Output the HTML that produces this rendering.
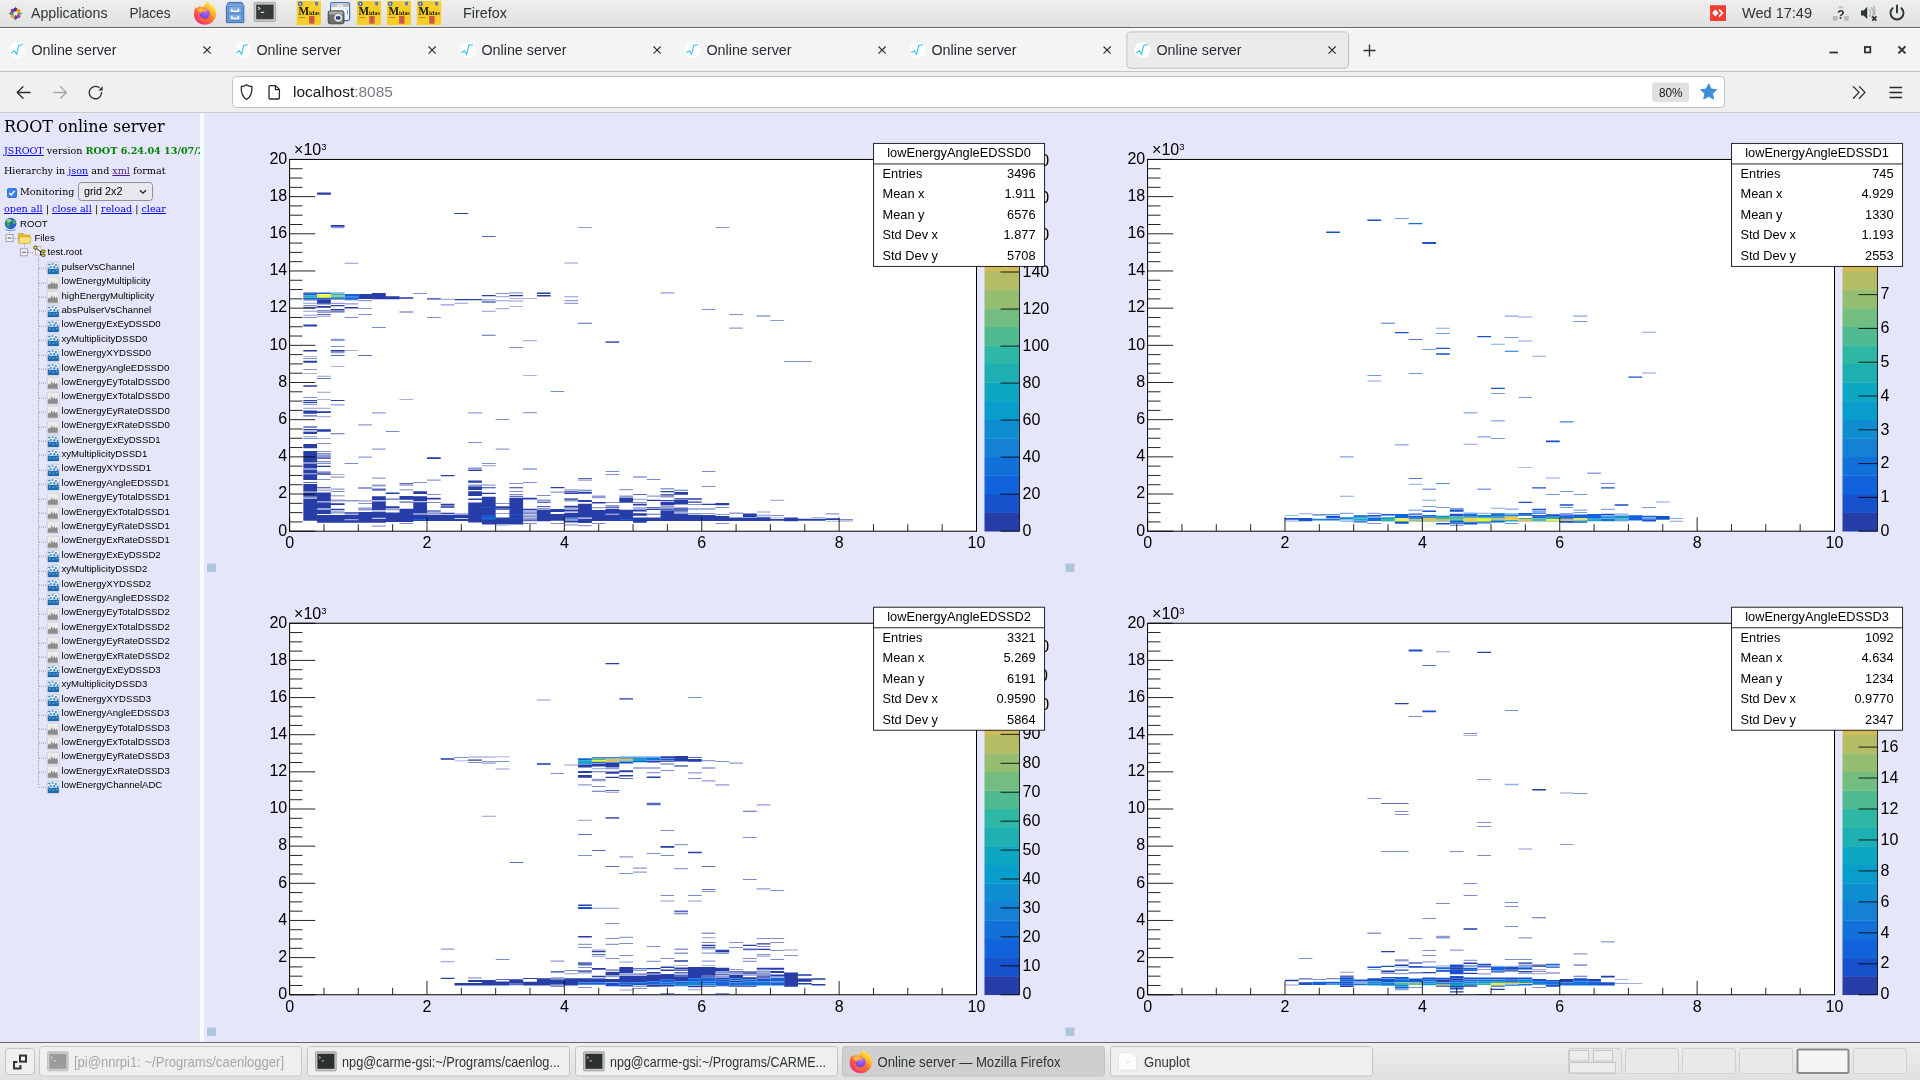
<!DOCTYPE html>
<html lang="en"><head><meta charset="utf-8"><title>Online server</title>
<style>
html,body{margin:0;padding:0;width:1920px;height:1080px;overflow:hidden;background:#e6e6fa}
svg,#side{will-change:transform}
body{position:relative;font-family:"Liberation Sans",sans-serif}
#panel{position:absolute;left:0;top:0;width:1920px;height:27px;background:linear-gradient(#eeeeee,#e1e1e1);border-bottom:1px solid #686868}
#tabbar{position:absolute;left:0;top:28px;width:1920px;height:43px;background:linear-gradient(#fff,#fff 1px,#f4f4f4 1px);border-bottom:1px solid #c2c2c4}
#navbar{position:absolute;left:0;top:72px;width:1920px;height:40px;background:#f0f0f1;border-bottom:1px solid #c9c9cc}
#urlbar{position:absolute;left:231.500px;top:4px;width:1493px;height:32px;background:#fff;border:1px solid #c3c3c8;border-radius:4px;box-sizing:border-box}
#side{position:absolute;left:0;top:0;width:200px;height:1043px;overflow:hidden;font-family:"DejaVu Serif",serif;font-size:9.6px;color:#000}
#sep{position:absolute;left:200px;top:113px;width:4.200px;height:929px;background:#f0ffff}
#side .ttl{position:absolute;left:4px;top:116.500px;font-size:16px;white-space:nowrap;line-height:19px}
#side .ln{position:absolute;left:4px;white-space:nowrap;line-height:12px}
#side .lk{color:#0000ee;text-decoration:underline}
#side .lk.vis{color:#551a8b}
#side .gr{color:#008000;font-weight:bold}
#side .cb{position:absolute;left:6.800px;top:188px;width:10px;height:10px}
#side .sel{position:absolute;left:78px;top:181.500px;width:74.500px;height:19.500px;box-sizing:border-box;border:1px solid #8f8f9d;border-radius:3.500px;background:#e9e9ed;font-family:"Liberation Sans",sans-serif;font-size:10.8px;line-height:17px;padding-left:5px;color:#000}
#side .tr{position:absolute;font-family:"Liberation Sans",sans-serif;font-size:9.6px;line-height:12px;white-space:nowrap;color:#000}
#taskbar{position:absolute;left:0;top:1042px;width:1920px;height:38px;background:linear-gradient(#eeeeee,#e0e0e0);border-top:1px solid #686868;box-sizing:border-box}
</style></head>
<body>
<div id="panel"><svg width="1920" height="28" viewBox="0 0 1920 28" style="position:absolute;left:0;top:0;font-family:'Liberation Sans',sans-serif">
<g transform="translate(15.5,13.5)">
<circle cx="4.00" cy="0.00" r="2.0" fill="#8bc34a"/>
<circle cx="2.83" cy="2.83" r="2.0" fill="#a54aa8"/>
<circle cx="0.00" cy="4.00" r="2.0" fill="#3f51b5"/>
<circle cx="-2.83" cy="2.83" r="2.0" fill="#f5a623"/>
<circle cx="-4.00" cy="0.00" r="2.0" fill="#4caf50"/>
<circle cx="-2.83" cy="-2.83" r="2.0" fill="#9c27b0"/>
<circle cx="-0.00" cy="-4.00" r="2.0" fill="#283593"/>
<circle cx="2.83" cy="-2.83" r="2.0" fill="#ff9800"/>
<path d="M-7 0 L7 0 M0 -7 L0 7" stroke="#5a5a9a" stroke-width="0.8" opacity="0.6"/>
<circle cx="0" cy="0" r="1.6" fill="#ececec"/>
</g>
<text x="31" y="18" font-size="14.6" fill="#2e3436" textLength="76.5" lengthAdjust="spacingAndGlyphs" font-weight="normal" >Applications</text>
<text x="129.5" y="18" font-size="14.6" fill="#2e3436" textLength="41" lengthAdjust="spacingAndGlyphs" font-weight="normal" >Places</text>
<g transform="translate(193,0.8) scale(1.0)"><defs><linearGradient id="ffA" x1="0.82" y1="0.08" x2="0.22" y2="0.95"><stop offset="0" stop-color="#fff45e"/><stop offset="0.28" stop-color="#ffbc2c"/><stop offset="0.58" stop-color="#ff6e38"/><stop offset="1" stop-color="#ee2a80"/></linearGradient><radialGradient id="ffB" cx="0.55" cy="0.3" r="0.8"><stop offset="0" stop-color="#b96cff"/><stop offset="1" stop-color="#5f3bdc"/></radialGradient><linearGradient id="ffC" x1="0.1" y1="0" x2="0.8" y2="1"><stop offset="0" stop-color="#ffd23a"/><stop offset="1" stop-color="#ff8a2c"/></linearGradient></defs>
<path d="M12.3 3.4 C13.5 2.4 14.1 1.2 14.3 0.2 C16.6 2 18.1 4 18.7 6.1 C19.1 5.4 19.2 4.6 19.1 3.8 C21.6 6.100 23.3 9.500 23.100 13.300 C22.800 19.500 17.900 24 12.100 24 C5.900 24 1 19.400 0.900 13.500 C0.800 10.500 1.900 7.700 3.500 5.900 C3.500 6.900 3.700 7.700 4.100 8.300 C4.700 6.900 5.700 5.900 6.900 5.300 C7.700 6.300 9.100 6.700 10.300 6.300 C10.700 5.100 11.400 4.100 12.300 3.400Z" fill="url(#ffA)"/>
<circle cx="11.7" cy="13" r="5" fill="url(#ffB)"/>
<path d="M4.400 9.200 C6.400 7.300 9.500 7.200 11.700 8.600 C13.100 8.400 14.500 9 15.200 10.100 C13.500 9.700 12.100 10.100 11.300 11.100 C9.700 10.700 8.100 11.300 7.300 12.700 C6.700 11.100 5.600 9.900 4.400 9.200Z" fill="url(#ffC)"/>
<path d="M6.700 14.200 C7.200 17.800 10.400 19.800 13.600 19 C16.600 18.200 18.200 15.400 17.400 12.500 C19 14.700 18.700 18.200 16.200 20.200 C13.100 22.600 8.600 21.800 6.700 18.700 C6 17.400 6.100 15.500 6.700 14.200Z" fill="#ff6a34" opacity="0.85"/>
</g>
<g>
<path d="M228.400 2.400 h13.400 l2 3.200 v17 h-17.400 v-17z" fill="#6b9bd8" stroke="#3c6cb2" stroke-width="1" stroke-linejoin="round"/>
<path d="M226.600 5.600 h17" stroke="#8fb6e8" stroke-width="0.8"/>
<rect x="228.600" y="6.600" width="13" height="6.400" fill="#86b0e2" stroke="#4c7cc0" stroke-width="0.7"/>
<rect x="228.600" y="14" width="13" height="6.400" fill="#86b0e2" stroke="#4c7cc0" stroke-width="0.7"/>
<path d="M231.800 8.800 v2.400 h6.600 v-2.400" fill="none" stroke="#f4f6fa" stroke-width="1.500" stroke-linejoin="round"/>
<path d="M231.800 16 v2.400 h6.600 v-2.400" fill="none" stroke="#f4f6fa" stroke-width="1.500" stroke-linejoin="round"/>
</g>
<g>
<rect x="254.2" y="2.4" width="21.4" height="19" rx="1" fill="#c9c9c7" stroke="#9b9b99" stroke-width="0.8"/>
<rect x="256.2" y="4.6" width="17.4" height="14.6" fill="#363b39"/>
<path d="M258 7.200 l2.300 1.300 l-2.300 1.300" fill="none" stroke="#f0f2f0" stroke-width="0.9"/>
<rect x="260.800" y="11.800" width="3.400" height="1.100" fill="#f0f2f0"/>
</g>
<g transform="translate(296.8,1)">
<rect x="0" y="0" width="24.2" height="24" fill="#f7ce28"/>
<circle cx="3.5" cy="2.7" r="2.3" fill="#2f5aa0"/><circle cx="3.5" cy="2.7" r="1" fill="#e4ebf6"/>
<path d="M18.2 0.8 h3 v2.6 l-1.5 1.6 l-1.5 -1.6z" fill="#5a7cc0"/>
<text x="1.6" y="13.6" font-family="'Liberation Serif', serif" font-weight="bold" font-size="11.8" fill="#1c1b12" textLength="21.4" lengthAdjust="spacingAndGlyphs">M<tspan font-size="6.6">idas</tspan></text>
<rect x="2" y="16.2" width="6.600" height="0.8" fill="#8d8030"/>
<rect x="12.3" y="14.900" width="5.400" height="7.800" fill="#e4552a"/>
<rect x="14.4" y="16.2" width="1.200" height="5.600" fill="#6a6aa8"/>
</g>
<g>
<rect x="330.600" y="2.600" width="19" height="18" rx="1.800" fill="#f6f6f6" stroke="#3f6fb5" stroke-width="1.200"/>
<rect x="331.400" y="3.600" width="17.400" height="3.200" fill="#b9bcc2"/>
<rect x="337" y="4.400" width="6" height="2.400" fill="#e4e4e6"/>
<rect x="347" y="10" width="1" height="4.400" fill="#5b9ae6"/>
<rect x="331.600" y="8" width="15" height="10" fill="#fdfdfd" stroke="#cfd2d6" stroke-width="0.500"/>
<rect x="328.200" y="10.800" width="15.800" height="13" rx="2" fill="#6b6e6c" stroke="#3a3c3a" stroke-width="0.900"/>
<rect x="329" y="11.600" width="14.200" height="3" rx="1" fill="#a8abaa"/>
<rect x="330.400" y="10.200" width="4" height="1.600" fill="#8a8d8b"/>
<circle cx="338.300" cy="17.700" r="4.300" fill="#e6e8e7" stroke="#7c7f7d" stroke-width="0.700"/>
<rect x="336" y="16.200" width="4.400" height="3.200" rx="0.800" fill="#1c2c6c"/>
<rect x="336.400" y="16.600" width="2" height="1" fill="#4a78d8"/>
<circle cx="342" cy="21.800" r="0.700" fill="#f0a020"/>
</g>
<g transform="translate(356.9,1)">
<rect x="0" y="0" width="24.2" height="24" fill="#f7ce28"/>
<circle cx="3.5" cy="2.7" r="2.3" fill="#2f5aa0"/><circle cx="3.5" cy="2.7" r="1" fill="#e4ebf6"/>
<path d="M18.2 0.8 h3 v2.6 l-1.5 1.6 l-1.5 -1.6z" fill="#5a7cc0"/>
<text x="1.6" y="13.6" font-family="'Liberation Serif', serif" font-weight="bold" font-size="11.8" fill="#1c1b12" textLength="21.4" lengthAdjust="spacingAndGlyphs">M<tspan font-size="6.6">idas</tspan></text>
<rect x="2" y="16.2" width="6.600" height="0.8" fill="#8d8030"/>
<rect x="12.3" y="14.900" width="5.400" height="7.800" fill="#e4552a"/>
<rect x="14.4" y="16.2" width="1.200" height="5.600" fill="#6a6aa8"/>
</g>
<g transform="translate(386.8,1)">
<rect x="0" y="0" width="24.2" height="24" fill="#f7ce28"/>
<circle cx="3.5" cy="2.7" r="2.3" fill="#2f5aa0"/><circle cx="3.5" cy="2.7" r="1" fill="#e4ebf6"/>
<path d="M18.2 0.8 h3 v2.6 l-1.5 1.6 l-1.5 -1.6z" fill="#5a7cc0"/>
<text x="1.6" y="13.6" font-family="'Liberation Serif', serif" font-weight="bold" font-size="11.8" fill="#1c1b12" textLength="21.4" lengthAdjust="spacingAndGlyphs">M<tspan font-size="6.6">idas</tspan></text>
<rect x="2" y="16.2" width="6.600" height="0.8" fill="#8d8030"/>
<rect x="12.3" y="14.900" width="5.400" height="7.800" fill="#e4552a"/>
<rect x="14.4" y="16.2" width="1.200" height="5.600" fill="#6a6aa8"/>
</g>
<g transform="translate(416.9,1)">
<rect x="0" y="0" width="24.2" height="24" fill="#f7ce28"/>
<circle cx="3.5" cy="2.7" r="2.3" fill="#2f5aa0"/><circle cx="3.5" cy="2.7" r="1" fill="#e4ebf6"/>
<path d="M18.2 0.8 h3 v2.6 l-1.5 1.6 l-1.5 -1.6z" fill="#5a7cc0"/>
<text x="1.6" y="13.6" font-family="'Liberation Serif', serif" font-weight="bold" font-size="11.8" fill="#1c1b12" textLength="21.4" lengthAdjust="spacingAndGlyphs">M<tspan font-size="6.6">idas</tspan></text>
<rect x="2" y="16.2" width="6.600" height="0.8" fill="#8d8030"/>
<rect x="12.3" y="14.900" width="5.400" height="7.800" fill="#e4552a"/>
<rect x="14.4" y="16.2" width="1.200" height="5.600" fill="#6a6aa8"/>
</g>
<text x="463" y="18" font-size="14.6" fill="#2e3436" textLength="44" lengthAdjust="spacingAndGlyphs" font-weight="normal" >Firefox</text>
<rect x="1710" y="5.200" width="16" height="15.800" fill="#f33f33"/>
<path d="M1715.400 9.600 l3.200 3.500 l-3.200 3.500 l-3.200 -3.500z" fill="#fff"/><path d="M1719 9.600 l3.400 3.500 l-3.400 3.500" fill="none" stroke="#fff" stroke-width="1.600"/>
<text x="1742" y="18" font-size="14.6" fill="#2e3436" textLength="70" lengthAdjust="spacingAndGlyphs" font-weight="normal" >Wed 17:49</text>
<text x="1840.900" y="18.800" text-anchor="middle" font-size="12.500" font-weight="bold" fill="#2e3436">?</text>
<rect x="1832.900" y="16" width="4.600" height="4.800" fill="#b9b9b9"/><rect x="1844.200" y="16" width="4.600" height="4.800" fill="#b9b9b9"/><rect x="1838.400" y="6.200" width="4.800" height="2" fill="#c4c4c4"/>
<path d="M1861 10.400 h2.600 l3.600 -3.600 v12.200 l-3.600 -3.600 h-2.600z" fill="#2e3436"/>
<path d="M1869.200 9.200 a5.500 5.500 0 0 1 0 7.400 M1871.400 7.400 a8.500 8.500 0 0 1 0 11 M1873.600 6 a11 11 0 0 1 0.600 9" fill="none" stroke="#a4a6a6" stroke-width="1.100"/>
<path d="M1872.200 16.400 l4.200 4.200 m0 -4.200 l-4.200 4.200" stroke="#2e3436" stroke-width="1.800"/>
<path d="M1892.600 8.200 a6.500 6.500 0 1 0 8.800 0" fill="none" stroke="#2e3436" stroke-width="1.900" stroke-linecap="round"/><path d="M1897 5.400 v7" stroke="#2e3436" stroke-width="1.900" stroke-linecap="round"/>
</svg></div>
<div id="tabbar"><svg width="1920" height="44" viewBox="0 28 1920 44" style="position:absolute;left:0;top:0;font-family:'Liberation Sans',sans-serif">
<rect x="1126.900" y="31.900" width="221.600" height="36.400" rx="4" fill="#ebebec" stroke="#c2c2c6" stroke-width="1"/>
<circle cx="17.5" cy="50" r="8" fill="#fff"/><path d="M11.6 52.4 l3 -1.6 l2 3.6 l2.2 -9 l3.8 -0.6" fill="none" stroke="#35c4e4" stroke-width="1.1" stroke-linejoin="round" stroke-linecap="round"/>
<text x="31.5" y="55" font-size="14.6" fill="#2b2a33" textLength="85" lengthAdjust="spacingAndGlyphs" font-weight="normal" >Online server</text>
<path d="M203.5 46.5 l7.2 7.2 m0 -7.2 l-7.2 7.2" stroke="#2b2a33" stroke-width="1.1"/>
<circle cx="242.5" cy="50" r="8" fill="#fff"/><path d="M236.6 52.4 l3 -1.6 l2 3.6 l2.2 -9 l3.8 -0.6" fill="none" stroke="#35c4e4" stroke-width="1.1" stroke-linejoin="round" stroke-linecap="round"/>
<text x="256.5" y="55" font-size="14.6" fill="#2b2a33" textLength="85" lengthAdjust="spacingAndGlyphs" font-weight="normal" >Online server</text>
<path d="M428.5 46.5 l7.2 7.2 m0 -7.2 l-7.2 7.2" stroke="#2b2a33" stroke-width="1.1"/>
<circle cx="467.5" cy="50" r="8" fill="#fff"/><path d="M461.6 52.4 l3 -1.6 l2 3.6 l2.2 -9 l3.8 -0.6" fill="none" stroke="#35c4e4" stroke-width="1.1" stroke-linejoin="round" stroke-linecap="round"/>
<text x="481.5" y="55" font-size="14.6" fill="#2b2a33" textLength="85" lengthAdjust="spacingAndGlyphs" font-weight="normal" >Online server</text>
<path d="M653.5 46.5 l7.2 7.2 m0 -7.2 l-7.2 7.2" stroke="#2b2a33" stroke-width="1.1"/>
<circle cx="692.5" cy="50" r="8" fill="#fff"/><path d="M686.6 52.4 l3 -1.6 l2 3.6 l2.2 -9 l3.8 -0.6" fill="none" stroke="#35c4e4" stroke-width="1.1" stroke-linejoin="round" stroke-linecap="round"/>
<text x="706.5" y="55" font-size="14.6" fill="#2b2a33" textLength="85" lengthAdjust="spacingAndGlyphs" font-weight="normal" >Online server</text>
<path d="M878.5 46.5 l7.2 7.2 m0 -7.2 l-7.2 7.2" stroke="#2b2a33" stroke-width="1.1"/>
<circle cx="917.5" cy="50" r="8" fill="#fff"/><path d="M911.6 52.4 l3 -1.6 l2 3.6 l2.2 -9 l3.8 -0.6" fill="none" stroke="#35c4e4" stroke-width="1.1" stroke-linejoin="round" stroke-linecap="round"/>
<text x="931.5" y="55" font-size="14.6" fill="#2b2a33" textLength="85" lengthAdjust="spacingAndGlyphs" font-weight="normal" >Online server</text>
<path d="M1103.5 46.5 l7.2 7.2 m0 -7.2 l-7.2 7.2" stroke="#2b2a33" stroke-width="1.1"/>
<circle cx="1142.5" cy="50" r="8" fill="#fff"/><path d="M1136.6 52.4 l3 -1.6 l2 3.6 l2.2 -9 l3.8 -0.6" fill="none" stroke="#35c4e4" stroke-width="1.1" stroke-linejoin="round" stroke-linecap="round"/>
<text x="1156.5" y="55" font-size="14.6" fill="#2b2a33" textLength="85" lengthAdjust="spacingAndGlyphs" font-weight="normal" >Online server</text>
<path d="M1328.5 46.5 l7.2 7.2 m0 -7.2 l-7.2 7.2" stroke="#2b2a33" stroke-width="1.1"/>
<path d="M1363.5 50.5 h12 M1369.5 44.5 v12" stroke="#2b2a33" stroke-width="1.3"/>
<rect x="1829.5" y="51.6" width="8.4" height="1.8" fill="#2e3436"/>
<rect x="1864.9" y="47" width="5.4" height="5.4" fill="none" stroke="#2e3436" stroke-width="1.8"/>
<path d="M1898.4 46.4 l7 7 m0 -7 l-7 7" stroke="#2e3436" stroke-width="2"/>
</svg></div>
<div id="navbar"><div id="urlbar"></div><svg width="1920" height="41" viewBox="0 72 1920 41" style="position:absolute;left:0;top:0;font-family:'Liberation Sans',sans-serif">
<path d="M30 92.5 h-12.6 m5.6 -5.8 l-5.8 5.8 l5.8 5.8" fill="none" stroke="#2b2a33" stroke-width="1.3" stroke-linecap="round" stroke-linejoin="round"/>
<path d="M53.6 92.5 h12.6 m-5.6 -5.8 l5.8 5.8 l-5.8 5.8" fill="none" stroke="#a8a8ad" stroke-width="1.3" stroke-linecap="round" stroke-linejoin="round"/>
<path d="M101.6 92.6 a6.2 6.2 0 1 1 -2.6 -5.1" fill="none" stroke="#2b2a33" stroke-width="1.3" stroke-linecap="round"/><path d="M102.6 86.2 v4.2 h-4.2z" fill="#2b2a33"/>
<path d="M246.5 85 c2.2 0 4 -0.8 5.3 -1.6 c1.3 0.8 3.1 1.6 5.3 1.6 c0.4 6 -1.4 10.6 -5.3 13 c-3.9 -2.4 -5.7 -7 -5.300 -13z" transform="translate(-5.2,1.5) scale(1)" fill="none" stroke="#2b2a33" stroke-width="1.3" stroke-linejoin="round"/>
<path d="M270 85.6 h5.6 l3.8 3.8 v8.6 a1 1 0 0 1 -1 1 h-8.400 a1 1 0 0 1 -1 -1 v-11.4 a1 1 0 0 1 1 -1z M275.4 85.8 v3.8 h3.800" fill="none" stroke="#2b2a33" stroke-width="1.3" stroke-linejoin="round"/>
<text x="293" y="97" font-size="14.7" fill="#15141a" textLength="100" lengthAdjust="spacingAndGlyphs">localhost<tspan fill="#7c7c85">:8085</tspan></text>
<rect x="1652" y="82.5" width="37" height="19.500" rx="3" fill="#e0e0e1"/>
<text x="1659" y="97" font-size="12.6" fill="#15141a" textLength="23.5" lengthAdjust="spacingAndGlyphs" font-weight="normal" >80%</text>
<polygon points="1708.70,83.90 1711.05,89.06 1716.69,89.70 1712.50,93.54 1713.64,99.10 1708.70,96.30 1703.76,99.10 1704.90,93.54 1700.71,89.70 1706.35,89.06" fill="#3e8ddb" stroke="#3e8ddb" stroke-width="1" stroke-linejoin="round"/>
<path d="M1853.4 86.6 l5.6 5.8 l-5.6 5.800 M1859.400 86.6 l5.6 5.8 l-5.6 5.800" fill="none" stroke="#2b2a33" stroke-width="1.3" stroke-linecap="round" stroke-linejoin="round"/>
<path d="M1889.5 87.500 h12.6 M1889.5 92.500 h12.6 M1889.500 97.500 h12.600" stroke="#2b2a33" stroke-width="1.3"/>
</svg></div>
<div id="side">
<div class="ttl">ROOT online server</div>
<div class="ln" style="top:144.500px"><a class="lk">JSROOT</a> version <b class="gr">ROOT 6.24.04 13/07/2022</b></div>
<div class="ln" style="top:164.500px">Hierarchy in <a class="lk">json</a> and <a class="lk vis">xml</a> format</div>
<div class="cb"><svg width="10" height="10" viewBox="0 0 11 11" style="display:block"><rect x="0.5" y="0.500" width="10" height="10" rx="1.6" fill="#3b82e6" stroke="#2a6fd0"/><path d="M2.600 5.600 l2 2 l3.800 -4.400" fill="none" stroke="#fff" stroke-width="1.500"/></svg></div>
<div class="ln" style="top:185.500px;left:20px">Monitoring</div>
<div class="sel"><span>grid 2x2</span><svg width="8" height="6" viewBox="0 0 8 6" style="position:absolute;right:4.500px;top:6.500px"><path d="M1 1.200 l3 3 l3 -3" fill="none" stroke="#222" stroke-width="1.300"/></svg></div>
<div class="ln" style="top:202.500px"><a class="lk">open all</a> | <a class="lk">close all</a> | <a class="lk">reload</a> | <a class="lk">clear</a></div>
<svg width="200" height="930" viewBox="0 0 200 930" style="position:absolute;left:0;top:0">
<g><circle cx="10.600" cy="223.500" r="5.800" fill="#2a62c8"/><path d="M6.500 220 c2 -2 4 -1 5 0 c0 2 -1.500 2.500 -2 4 c-0.500 1.500 0.500 3 -1 3.500 c-1.500 -1 -3 -4 -2 -7.500z" fill="#3fae3a"/><path d="M12.500 219.500 c1.500 0.500 3 2 3 4 c-1 1 -2 0.500 -2.500 -1z" fill="#58c040"/><ellipse cx="9" cy="220.500" rx="2.500" ry="1.500" fill="#fff" opacity="0.45"/><path d="M5.500 229.500 q5 2 10 0" stroke="#5b8fe0" stroke-width="1.200" fill="none"/></g>
<path d="M9.500 230 v4 M13 238.500 h5 M24.500 244 v4 M28 252.500 h6" stroke="#9c9ca6" stroke-width="1" stroke-dasharray="1,1" fill="none"/>
<path d="M38.500 258 v527.500" stroke="#9c9ca6" stroke-width="1" stroke-dasharray="1,1" fill="none"/>
<rect x="6" y="234.5" width="7" height="7" fill="#f4f4f8" stroke="#9a9aa2" stroke-width="0.9"/><path d="M7.6 238.0 h3.800" stroke="#444" stroke-width="0.9"/>
<rect x="20.5" y="248.8" width="7" height="7" fill="#f4f4f8" stroke="#9a9aa2" stroke-width="0.9"/><path d="M22.1 252.3 h3.800" stroke="#444" stroke-width="0.9"/>
<g><path d="M18.500 233.500 h4.500 l1.200 1.600 h5.800 v8 h-11.500z" fill="#e8b830" stroke="#c89a18" stroke-width="0.6"/><path d="M19.500 237 h11.800 l-1.600 6.300 h-11z" fill="#fbe27a" stroke="#d4a820" stroke-width="0.6"/></g>
<g><rect x="35.500" y="246.500" width="5.500" height="8.500" fill="#f0f0f0" stroke="#999" stroke-width="0.6"/><circle cx="35.300" cy="247.600" r="1.700" fill="#e8d820" stroke="#222" stroke-width="0.700"/><path d="M36.500 248.500 l4 3 v3.500 h2.500 M40.500 251.500 h2" stroke="#222" stroke-width="1" fill="none"/><rect x="41.500" y="250" width="3.600" height="2.400" rx="1" fill="#e8d820" stroke="#222" stroke-width="0.700"/><rect x="41.500" y="254" width="3.600" height="2.400" rx="1" fill="#e8d820" stroke="#222" stroke-width="0.700"/></g>
<path d="M39 268.2 h7" stroke="#9c9ca6" stroke-width="1" stroke-dasharray="1,1" fill="none"/>
<g transform="translate(46.8,261.8)"><rect x="0.4" y="0.4" width="12" height="12" rx="1" fill="#eaf1f8" stroke="#b8c4d0" stroke-width="0.8"/>
<rect x="1" y="7" width="11" height="5.200" fill="#1f6cb0"/>
<path d="M1.500 2 h2 v1.500 h-2z M5 1.500 h1.500 v1.500 h-1.500z M8 2.500 h2 v1.500 h-2z M3 4.500 h2 v1.500 h-2z M6.500 4.500 h2 v2 h-2z M10 5 h1.500 v2 h-1.500z M1.500 5.500 h1 v1.500 h-1z" fill="#2a78bd"/>
<path d="M2.500 8.500 h1.200 v1 h-1.200z M6 9 h1.500 v1 h-1.500z M9.500 8.300 h1 v1 h-1z" fill="#9cc4e6"/></g>
<path d="M39 283.2 h7" stroke="#9c9ca6" stroke-width="1" stroke-dasharray="1,1" fill="none"/>
<g transform="translate(46.8,276.8)"><rect x="0.4" y="0.4" width="12" height="12" rx="1" fill="#f2f2f2" stroke="#c8c8c8" stroke-width="0.8"/>
<path d="M1 12 v-3.500 l1.500 -2 l1 1.500 l1.500 -4 l1 3.500 l1.500 -2.500 l1 2.500 l1.500 -1.500 l1 2 v4z" fill="#8c8c8c"/>
<path d="M3 2 v4 M5.5 2 v2 M8 2 v3.500 M10.500 2 v4.500" stroke="#dcdcdc" stroke-width="0.8"/></g>
<path d="M39 297.2 h7" stroke="#9c9ca6" stroke-width="1" stroke-dasharray="1,1" fill="none"/>
<g transform="translate(46.8,290.8)"><rect x="0.4" y="0.4" width="12" height="12" rx="1" fill="#f2f2f2" stroke="#c8c8c8" stroke-width="0.8"/>
<path d="M1 12 v-3.500 l1.500 -2 l1 1.500 l1.500 -4 l1 3.500 l1.500 -2.500 l1 2.500 l1.500 -1.500 l1 2 v4z" fill="#8c8c8c"/>
<path d="M3 2 v4 M5.5 2 v2 M8 2 v3.500 M10.500 2 v4.500" stroke="#dcdcdc" stroke-width="0.8"/></g>
<path d="M39 311.2 h7" stroke="#9c9ca6" stroke-width="1" stroke-dasharray="1,1" fill="none"/>
<g transform="translate(46.8,304.8)"><rect x="0.4" y="0.4" width="12" height="12" rx="1" fill="#eaf1f8" stroke="#b8c4d0" stroke-width="0.8"/>
<rect x="1" y="7" width="11" height="5.200" fill="#1f6cb0"/>
<path d="M1.500 2 h2 v1.500 h-2z M5 1.500 h1.500 v1.500 h-1.500z M8 2.500 h2 v1.500 h-2z M3 4.500 h2 v1.500 h-2z M6.500 4.500 h2 v2 h-2z M10 5 h1.500 v2 h-1.500z M1.500 5.500 h1 v1.500 h-1z" fill="#2a78bd"/>
<path d="M2.500 8.500 h1.200 v1 h-1.200z M6 9 h1.500 v1 h-1.500z M9.500 8.300 h1 v1 h-1z" fill="#9cc4e6"/></g>
<path d="M39 326.2 h7" stroke="#9c9ca6" stroke-width="1" stroke-dasharray="1,1" fill="none"/>
<g transform="translate(46.8,319.8)"><rect x="0.4" y="0.4" width="12" height="12" rx="1" fill="#eaf1f8" stroke="#b8c4d0" stroke-width="0.8"/>
<rect x="1" y="7" width="11" height="5.200" fill="#1f6cb0"/>
<path d="M1.500 2 h2 v1.500 h-2z M5 1.500 h1.500 v1.500 h-1.500z M8 2.500 h2 v1.500 h-2z M3 4.500 h2 v1.500 h-2z M6.500 4.500 h2 v2 h-2z M10 5 h1.500 v2 h-1.500z M1.500 5.500 h1 v1.500 h-1z" fill="#2a78bd"/>
<path d="M2.500 8.500 h1.200 v1 h-1.200z M6 9 h1.500 v1 h-1.500z M9.500 8.300 h1 v1 h-1z" fill="#9cc4e6"/></g>
<path d="M39 340.2 h7" stroke="#9c9ca6" stroke-width="1" stroke-dasharray="1,1" fill="none"/>
<g transform="translate(46.8,333.8)"><rect x="0.4" y="0.4" width="12" height="12" rx="1" fill="#eaf1f8" stroke="#b8c4d0" stroke-width="0.8"/>
<rect x="1" y="7" width="11" height="5.200" fill="#1f6cb0"/>
<path d="M1.500 2 h2 v1.500 h-2z M5 1.500 h1.500 v1.500 h-1.500z M8 2.500 h2 v1.500 h-2z M3 4.500 h2 v1.500 h-2z M6.500 4.500 h2 v2 h-2z M10 5 h1.500 v2 h-1.500z M1.500 5.500 h1 v1.500 h-1z" fill="#2a78bd"/>
<path d="M2.500 8.500 h1.200 v1 h-1.200z M6 9 h1.500 v1 h-1.500z M9.500 8.300 h1 v1 h-1z" fill="#9cc4e6"/></g>
<path d="M39 355.2 h7" stroke="#9c9ca6" stroke-width="1" stroke-dasharray="1,1" fill="none"/>
<g transform="translate(46.8,348.8)"><rect x="0.4" y="0.4" width="12" height="12" rx="1" fill="#eaf1f8" stroke="#b8c4d0" stroke-width="0.8"/>
<rect x="1" y="7" width="11" height="5.200" fill="#1f6cb0"/>
<path d="M1.500 2 h2 v1.500 h-2z M5 1.500 h1.500 v1.500 h-1.500z M8 2.500 h2 v1.500 h-2z M3 4.500 h2 v1.500 h-2z M6.500 4.500 h2 v2 h-2z M10 5 h1.500 v2 h-1.500z M1.500 5.500 h1 v1.500 h-1z" fill="#2a78bd"/>
<path d="M2.500 8.500 h1.200 v1 h-1.200z M6 9 h1.500 v1 h-1.500z M9.500 8.300 h1 v1 h-1z" fill="#9cc4e6"/></g>
<path d="M39 369.2 h7" stroke="#9c9ca6" stroke-width="1" stroke-dasharray="1,1" fill="none"/>
<g transform="translate(46.8,362.8)"><rect x="0.4" y="0.4" width="12" height="12" rx="1" fill="#eaf1f8" stroke="#b8c4d0" stroke-width="0.8"/>
<rect x="1" y="7" width="11" height="5.200" fill="#1f6cb0"/>
<path d="M1.500 2 h2 v1.500 h-2z M5 1.500 h1.500 v1.500 h-1.500z M8 2.500 h2 v1.500 h-2z M3 4.500 h2 v1.500 h-2z M6.500 4.500 h2 v2 h-2z M10 5 h1.500 v2 h-1.500z M1.500 5.500 h1 v1.500 h-1z" fill="#2a78bd"/>
<path d="M2.500 8.500 h1.200 v1 h-1.200z M6 9 h1.500 v1 h-1.500z M9.500 8.300 h1 v1 h-1z" fill="#9cc4e6"/></g>
<path d="M39 383.2 h7" stroke="#9c9ca6" stroke-width="1" stroke-dasharray="1,1" fill="none"/>
<g transform="translate(46.8,376.8)"><rect x="0.4" y="0.4" width="12" height="12" rx="1" fill="#f2f2f2" stroke="#c8c8c8" stroke-width="0.8"/>
<path d="M1 12 v-3.500 l1.500 -2 l1 1.500 l1.500 -4 l1 3.500 l1.500 -2.500 l1 2.500 l1.500 -1.500 l1 2 v4z" fill="#8c8c8c"/>
<path d="M3 2 v4 M5.5 2 v2 M8 2 v3.500 M10.500 2 v4.500" stroke="#dcdcdc" stroke-width="0.8"/></g>
<path d="M39 398.2 h7" stroke="#9c9ca6" stroke-width="1" stroke-dasharray="1,1" fill="none"/>
<g transform="translate(46.8,391.8)"><rect x="0.4" y="0.4" width="12" height="12" rx="1" fill="#f2f2f2" stroke="#c8c8c8" stroke-width="0.8"/>
<path d="M1 12 v-3.500 l1.500 -2 l1 1.500 l1.500 -4 l1 3.500 l1.500 -2.500 l1 2.500 l1.500 -1.500 l1 2 v4z" fill="#8c8c8c"/>
<path d="M3 2 v4 M5.5 2 v2 M8 2 v3.500 M10.500 2 v4.500" stroke="#dcdcdc" stroke-width="0.8"/></g>
<path d="M39 412.2 h7" stroke="#9c9ca6" stroke-width="1" stroke-dasharray="1,1" fill="none"/>
<g transform="translate(46.8,405.8)"><rect x="0.4" y="0.4" width="12" height="12" rx="1" fill="#f2f2f2" stroke="#c8c8c8" stroke-width="0.8"/>
<path d="M1 12 v-3.500 l1.500 -2 l1 1.500 l1.500 -4 l1 3.500 l1.500 -2.500 l1 2.500 l1.500 -1.500 l1 2 v4z" fill="#8c8c8c"/>
<path d="M3 2 v4 M5.5 2 v2 M8 2 v3.500 M10.500 2 v4.500" stroke="#dcdcdc" stroke-width="0.8"/></g>
<path d="M39 427.2 h7" stroke="#9c9ca6" stroke-width="1" stroke-dasharray="1,1" fill="none"/>
<g transform="translate(46.8,420.8)"><rect x="0.4" y="0.4" width="12" height="12" rx="1" fill="#f2f2f2" stroke="#c8c8c8" stroke-width="0.8"/>
<path d="M1 12 v-3.500 l1.500 -2 l1 1.500 l1.500 -4 l1 3.500 l1.500 -2.500 l1 2.500 l1.500 -1.500 l1 2 v4z" fill="#8c8c8c"/>
<path d="M3 2 v4 M5.5 2 v2 M8 2 v3.500 M10.500 2 v4.500" stroke="#dcdcdc" stroke-width="0.8"/></g>
<path d="M39 441.2 h7" stroke="#9c9ca6" stroke-width="1" stroke-dasharray="1,1" fill="none"/>
<g transform="translate(46.8,434.8)"><rect x="0.4" y="0.4" width="12" height="12" rx="1" fill="#eaf1f8" stroke="#b8c4d0" stroke-width="0.8"/>
<rect x="1" y="7" width="11" height="5.200" fill="#1f6cb0"/>
<path d="M1.500 2 h2 v1.500 h-2z M5 1.500 h1.500 v1.500 h-1.500z M8 2.500 h2 v1.500 h-2z M3 4.500 h2 v1.500 h-2z M6.500 4.500 h2 v2 h-2z M10 5 h1.500 v2 h-1.500z M1.500 5.500 h1 v1.500 h-1z" fill="#2a78bd"/>
<path d="M2.500 8.500 h1.200 v1 h-1.200z M6 9 h1.500 v1 h-1.500z M9.500 8.300 h1 v1 h-1z" fill="#9cc4e6"/></g>
<path d="M39 455.2 h7" stroke="#9c9ca6" stroke-width="1" stroke-dasharray="1,1" fill="none"/>
<g transform="translate(46.8,448.8)"><rect x="0.4" y="0.4" width="12" height="12" rx="1" fill="#eaf1f8" stroke="#b8c4d0" stroke-width="0.8"/>
<rect x="1" y="7" width="11" height="5.200" fill="#1f6cb0"/>
<path d="M1.500 2 h2 v1.500 h-2z M5 1.500 h1.500 v1.500 h-1.500z M8 2.500 h2 v1.500 h-2z M3 4.500 h2 v1.500 h-2z M6.500 4.500 h2 v2 h-2z M10 5 h1.500 v2 h-1.500z M1.500 5.500 h1 v1.500 h-1z" fill="#2a78bd"/>
<path d="M2.500 8.500 h1.200 v1 h-1.200z M6 9 h1.500 v1 h-1.500z M9.500 8.300 h1 v1 h-1z" fill="#9cc4e6"/></g>
<path d="M39 470.2 h7" stroke="#9c9ca6" stroke-width="1" stroke-dasharray="1,1" fill="none"/>
<g transform="translate(46.8,463.8)"><rect x="0.4" y="0.4" width="12" height="12" rx="1" fill="#eaf1f8" stroke="#b8c4d0" stroke-width="0.8"/>
<rect x="1" y="7" width="11" height="5.200" fill="#1f6cb0"/>
<path d="M1.500 2 h2 v1.500 h-2z M5 1.500 h1.500 v1.500 h-1.500z M8 2.500 h2 v1.500 h-2z M3 4.500 h2 v1.500 h-2z M6.500 4.500 h2 v2 h-2z M10 5 h1.500 v2 h-1.500z M1.500 5.500 h1 v1.500 h-1z" fill="#2a78bd"/>
<path d="M2.500 8.500 h1.200 v1 h-1.200z M6 9 h1.500 v1 h-1.500z M9.500 8.300 h1 v1 h-1z" fill="#9cc4e6"/></g>
<path d="M39 484.2 h7" stroke="#9c9ca6" stroke-width="1" stroke-dasharray="1,1" fill="none"/>
<g transform="translate(46.8,477.8)"><rect x="0.4" y="0.4" width="12" height="12" rx="1" fill="#eaf1f8" stroke="#b8c4d0" stroke-width="0.8"/>
<rect x="1" y="7" width="11" height="5.200" fill="#1f6cb0"/>
<path d="M1.500 2 h2 v1.500 h-2z M5 1.500 h1.500 v1.500 h-1.500z M8 2.500 h2 v1.500 h-2z M3 4.500 h2 v1.500 h-2z M6.500 4.500 h2 v2 h-2z M10 5 h1.500 v2 h-1.500z M1.500 5.500 h1 v1.500 h-1z" fill="#2a78bd"/>
<path d="M2.500 8.500 h1.200 v1 h-1.200z M6 9 h1.500 v1 h-1.500z M9.500 8.300 h1 v1 h-1z" fill="#9cc4e6"/></g>
<path d="M39 499.2 h7" stroke="#9c9ca6" stroke-width="1" stroke-dasharray="1,1" fill="none"/>
<g transform="translate(46.8,492.8)"><rect x="0.4" y="0.4" width="12" height="12" rx="1" fill="#f2f2f2" stroke="#c8c8c8" stroke-width="0.8"/>
<path d="M1 12 v-3.500 l1.500 -2 l1 1.500 l1.500 -4 l1 3.500 l1.500 -2.500 l1 2.500 l1.500 -1.500 l1 2 v4z" fill="#8c8c8c"/>
<path d="M3 2 v4 M5.5 2 v2 M8 2 v3.500 M10.500 2 v4.500" stroke="#dcdcdc" stroke-width="0.8"/></g>
<path d="M39 513.2 h7" stroke="#9c9ca6" stroke-width="1" stroke-dasharray="1,1" fill="none"/>
<g transform="translate(46.8,506.8)"><rect x="0.4" y="0.4" width="12" height="12" rx="1" fill="#f2f2f2" stroke="#c8c8c8" stroke-width="0.8"/>
<path d="M1 12 v-3.500 l1.500 -2 l1 1.500 l1.500 -4 l1 3.500 l1.500 -2.500 l1 2.500 l1.500 -1.500 l1 2 v4z" fill="#8c8c8c"/>
<path d="M3 2 v4 M5.5 2 v2 M8 2 v3.500 M10.500 2 v4.500" stroke="#dcdcdc" stroke-width="0.8"/></g>
<path d="M39 527.2 h7" stroke="#9c9ca6" stroke-width="1" stroke-dasharray="1,1" fill="none"/>
<g transform="translate(46.8,520.8)"><rect x="0.4" y="0.4" width="12" height="12" rx="1" fill="#f2f2f2" stroke="#c8c8c8" stroke-width="0.8"/>
<path d="M1 12 v-3.500 l1.500 -2 l1 1.500 l1.500 -4 l1 3.500 l1.500 -2.500 l1 2.500 l1.500 -1.500 l1 2 v4z" fill="#8c8c8c"/>
<path d="M3 2 v4 M5.5 2 v2 M8 2 v3.500 M10.500 2 v4.500" stroke="#dcdcdc" stroke-width="0.8"/></g>
<path d="M39 542.2 h7" stroke="#9c9ca6" stroke-width="1" stroke-dasharray="1,1" fill="none"/>
<g transform="translate(46.8,535.8)"><rect x="0.4" y="0.4" width="12" height="12" rx="1" fill="#f2f2f2" stroke="#c8c8c8" stroke-width="0.8"/>
<path d="M1 12 v-3.500 l1.500 -2 l1 1.500 l1.500 -4 l1 3.500 l1.500 -2.500 l1 2.500 l1.500 -1.500 l1 2 v4z" fill="#8c8c8c"/>
<path d="M3 2 v4 M5.5 2 v2 M8 2 v3.500 M10.500 2 v4.500" stroke="#dcdcdc" stroke-width="0.8"/></g>
<path d="M39 556.2 h7" stroke="#9c9ca6" stroke-width="1" stroke-dasharray="1,1" fill="none"/>
<g transform="translate(46.8,549.8)"><rect x="0.4" y="0.4" width="12" height="12" rx="1" fill="#eaf1f8" stroke="#b8c4d0" stroke-width="0.8"/>
<rect x="1" y="7" width="11" height="5.200" fill="#1f6cb0"/>
<path d="M1.500 2 h2 v1.500 h-2z M5 1.500 h1.500 v1.500 h-1.500z M8 2.500 h2 v1.500 h-2z M3 4.500 h2 v1.500 h-2z M6.500 4.500 h2 v2 h-2z M10 5 h1.500 v2 h-1.500z M1.500 5.500 h1 v1.500 h-1z" fill="#2a78bd"/>
<path d="M2.500 8.500 h1.200 v1 h-1.200z M6 9 h1.500 v1 h-1.500z M9.500 8.300 h1 v1 h-1z" fill="#9cc4e6"/></g>
<path d="M39 571.2 h7" stroke="#9c9ca6" stroke-width="1" stroke-dasharray="1,1" fill="none"/>
<g transform="translate(46.8,564.8)"><rect x="0.4" y="0.4" width="12" height="12" rx="1" fill="#eaf1f8" stroke="#b8c4d0" stroke-width="0.8"/>
<rect x="1" y="7" width="11" height="5.200" fill="#1f6cb0"/>
<path d="M1.500 2 h2 v1.500 h-2z M5 1.500 h1.500 v1.500 h-1.500z M8 2.500 h2 v1.500 h-2z M3 4.500 h2 v1.500 h-2z M6.500 4.500 h2 v2 h-2z M10 5 h1.500 v2 h-1.500z M1.500 5.500 h1 v1.500 h-1z" fill="#2a78bd"/>
<path d="M2.500 8.500 h1.200 v1 h-1.200z M6 9 h1.500 v1 h-1.500z M9.500 8.300 h1 v1 h-1z" fill="#9cc4e6"/></g>
<path d="M39 585.2 h7" stroke="#9c9ca6" stroke-width="1" stroke-dasharray="1,1" fill="none"/>
<g transform="translate(46.8,578.8)"><rect x="0.4" y="0.4" width="12" height="12" rx="1" fill="#eaf1f8" stroke="#b8c4d0" stroke-width="0.8"/>
<rect x="1" y="7" width="11" height="5.200" fill="#1f6cb0"/>
<path d="M1.500 2 h2 v1.500 h-2z M5 1.500 h1.500 v1.500 h-1.500z M8 2.500 h2 v1.500 h-2z M3 4.500 h2 v1.500 h-2z M6.500 4.500 h2 v2 h-2z M10 5 h1.500 v2 h-1.500z M1.500 5.500 h1 v1.500 h-1z" fill="#2a78bd"/>
<path d="M2.500 8.500 h1.200 v1 h-1.200z M6 9 h1.500 v1 h-1.500z M9.500 8.300 h1 v1 h-1z" fill="#9cc4e6"/></g>
<path d="M39 599.2 h7" stroke="#9c9ca6" stroke-width="1" stroke-dasharray="1,1" fill="none"/>
<g transform="translate(46.8,592.8)"><rect x="0.4" y="0.4" width="12" height="12" rx="1" fill="#eaf1f8" stroke="#b8c4d0" stroke-width="0.8"/>
<rect x="1" y="7" width="11" height="5.200" fill="#1f6cb0"/>
<path d="M1.500 2 h2 v1.500 h-2z M5 1.500 h1.500 v1.500 h-1.500z M8 2.500 h2 v1.500 h-2z M3 4.500 h2 v1.500 h-2z M6.500 4.500 h2 v2 h-2z M10 5 h1.500 v2 h-1.500z M1.500 5.500 h1 v1.500 h-1z" fill="#2a78bd"/>
<path d="M2.500 8.500 h1.200 v1 h-1.200z M6 9 h1.500 v1 h-1.500z M9.500 8.300 h1 v1 h-1z" fill="#9cc4e6"/></g>
<path d="M39 614.2 h7" stroke="#9c9ca6" stroke-width="1" stroke-dasharray="1,1" fill="none"/>
<g transform="translate(46.8,607.8)"><rect x="0.4" y="0.4" width="12" height="12" rx="1" fill="#f2f2f2" stroke="#c8c8c8" stroke-width="0.8"/>
<path d="M1 12 v-3.500 l1.500 -2 l1 1.500 l1.500 -4 l1 3.500 l1.500 -2.500 l1 2.500 l1.500 -1.500 l1 2 v4z" fill="#8c8c8c"/>
<path d="M3 2 v4 M5.5 2 v2 M8 2 v3.500 M10.500 2 v4.500" stroke="#dcdcdc" stroke-width="0.8"/></g>
<path d="M39 628.2 h7" stroke="#9c9ca6" stroke-width="1" stroke-dasharray="1,1" fill="none"/>
<g transform="translate(46.8,621.8)"><rect x="0.4" y="0.4" width="12" height="12" rx="1" fill="#f2f2f2" stroke="#c8c8c8" stroke-width="0.8"/>
<path d="M1 12 v-3.500 l1.500 -2 l1 1.500 l1.500 -4 l1 3.500 l1.500 -2.500 l1 2.500 l1.500 -1.500 l1 2 v4z" fill="#8c8c8c"/>
<path d="M3 2 v4 M5.5 2 v2 M8 2 v3.500 M10.500 2 v4.500" stroke="#dcdcdc" stroke-width="0.8"/></g>
<path d="M39 643.2 h7" stroke="#9c9ca6" stroke-width="1" stroke-dasharray="1,1" fill="none"/>
<g transform="translate(46.8,636.8)"><rect x="0.4" y="0.4" width="12" height="12" rx="1" fill="#f2f2f2" stroke="#c8c8c8" stroke-width="0.8"/>
<path d="M1 12 v-3.500 l1.500 -2 l1 1.500 l1.500 -4 l1 3.500 l1.500 -2.500 l1 2.500 l1.500 -1.500 l1 2 v4z" fill="#8c8c8c"/>
<path d="M3 2 v4 M5.5 2 v2 M8 2 v3.500 M10.500 2 v4.500" stroke="#dcdcdc" stroke-width="0.8"/></g>
<path d="M39 657.2 h7" stroke="#9c9ca6" stroke-width="1" stroke-dasharray="1,1" fill="none"/>
<g transform="translate(46.8,650.8)"><rect x="0.4" y="0.4" width="12" height="12" rx="1" fill="#f2f2f2" stroke="#c8c8c8" stroke-width="0.8"/>
<path d="M1 12 v-3.500 l1.500 -2 l1 1.500 l1.500 -4 l1 3.500 l1.500 -2.500 l1 2.500 l1.500 -1.500 l1 2 v4z" fill="#8c8c8c"/>
<path d="M3 2 v4 M5.5 2 v2 M8 2 v3.500 M10.500 2 v4.500" stroke="#dcdcdc" stroke-width="0.8"/></g>
<path d="M39 671.2 h7" stroke="#9c9ca6" stroke-width="1" stroke-dasharray="1,1" fill="none"/>
<g transform="translate(46.8,664.8)"><rect x="0.4" y="0.4" width="12" height="12" rx="1" fill="#eaf1f8" stroke="#b8c4d0" stroke-width="0.8"/>
<rect x="1" y="7" width="11" height="5.200" fill="#1f6cb0"/>
<path d="M1.500 2 h2 v1.500 h-2z M5 1.500 h1.500 v1.500 h-1.500z M8 2.500 h2 v1.500 h-2z M3 4.500 h2 v1.500 h-2z M6.500 4.500 h2 v2 h-2z M10 5 h1.500 v2 h-1.500z M1.500 5.500 h1 v1.500 h-1z" fill="#2a78bd"/>
<path d="M2.500 8.500 h1.200 v1 h-1.200z M6 9 h1.500 v1 h-1.500z M9.500 8.300 h1 v1 h-1z" fill="#9cc4e6"/></g>
<path d="M39 686.2 h7" stroke="#9c9ca6" stroke-width="1" stroke-dasharray="1,1" fill="none"/>
<g transform="translate(46.8,679.8)"><rect x="0.4" y="0.4" width="12" height="12" rx="1" fill="#eaf1f8" stroke="#b8c4d0" stroke-width="0.8"/>
<rect x="1" y="7" width="11" height="5.200" fill="#1f6cb0"/>
<path d="M1.500 2 h2 v1.500 h-2z M5 1.500 h1.500 v1.500 h-1.500z M8 2.500 h2 v1.500 h-2z M3 4.500 h2 v1.500 h-2z M6.500 4.500 h2 v2 h-2z M10 5 h1.500 v2 h-1.500z M1.500 5.500 h1 v1.500 h-1z" fill="#2a78bd"/>
<path d="M2.500 8.500 h1.200 v1 h-1.200z M6 9 h1.500 v1 h-1.500z M9.500 8.300 h1 v1 h-1z" fill="#9cc4e6"/></g>
<path d="M39 700.2 h7" stroke="#9c9ca6" stroke-width="1" stroke-dasharray="1,1" fill="none"/>
<g transform="translate(46.8,693.8)"><rect x="0.4" y="0.4" width="12" height="12" rx="1" fill="#eaf1f8" stroke="#b8c4d0" stroke-width="0.8"/>
<rect x="1" y="7" width="11" height="5.200" fill="#1f6cb0"/>
<path d="M1.500 2 h2 v1.500 h-2z M5 1.500 h1.500 v1.500 h-1.500z M8 2.500 h2 v1.500 h-2z M3 4.500 h2 v1.500 h-2z M6.500 4.500 h2 v2 h-2z M10 5 h1.500 v2 h-1.500z M1.500 5.500 h1 v1.500 h-1z" fill="#2a78bd"/>
<path d="M2.500 8.500 h1.200 v1 h-1.200z M6 9 h1.500 v1 h-1.500z M9.500 8.300 h1 v1 h-1z" fill="#9cc4e6"/></g>
<path d="M39 715.2 h7" stroke="#9c9ca6" stroke-width="1" stroke-dasharray="1,1" fill="none"/>
<g transform="translate(46.8,708.8)"><rect x="0.4" y="0.4" width="12" height="12" rx="1" fill="#eaf1f8" stroke="#b8c4d0" stroke-width="0.8"/>
<rect x="1" y="7" width="11" height="5.200" fill="#1f6cb0"/>
<path d="M1.500 2 h2 v1.500 h-2z M5 1.500 h1.500 v1.500 h-1.500z M8 2.500 h2 v1.500 h-2z M3 4.500 h2 v1.500 h-2z M6.500 4.500 h2 v2 h-2z M10 5 h1.500 v2 h-1.500z M1.500 5.500 h1 v1.500 h-1z" fill="#2a78bd"/>
<path d="M2.500 8.500 h1.200 v1 h-1.200z M6 9 h1.500 v1 h-1.500z M9.500 8.300 h1 v1 h-1z" fill="#9cc4e6"/></g>
<path d="M39 729.2 h7" stroke="#9c9ca6" stroke-width="1" stroke-dasharray="1,1" fill="none"/>
<g transform="translate(46.8,722.8)"><rect x="0.4" y="0.4" width="12" height="12" rx="1" fill="#f2f2f2" stroke="#c8c8c8" stroke-width="0.8"/>
<path d="M1 12 v-3.500 l1.500 -2 l1 1.500 l1.500 -4 l1 3.500 l1.500 -2.500 l1 2.500 l1.500 -1.500 l1 2 v4z" fill="#8c8c8c"/>
<path d="M3 2 v4 M5.5 2 v2 M8 2 v3.500 M10.500 2 v4.500" stroke="#dcdcdc" stroke-width="0.8"/></g>
<path d="M39 743.2 h7" stroke="#9c9ca6" stroke-width="1" stroke-dasharray="1,1" fill="none"/>
<g transform="translate(46.8,736.8)"><rect x="0.4" y="0.4" width="12" height="12" rx="1" fill="#f2f2f2" stroke="#c8c8c8" stroke-width="0.8"/>
<path d="M1 12 v-3.500 l1.500 -2 l1 1.500 l1.500 -4 l1 3.500 l1.500 -2.500 l1 2.500 l1.500 -1.500 l1 2 v4z" fill="#8c8c8c"/>
<path d="M3 2 v4 M5.5 2 v2 M8 2 v3.500 M10.500 2 v4.500" stroke="#dcdcdc" stroke-width="0.8"/></g>
<path d="M39 758.2 h7" stroke="#9c9ca6" stroke-width="1" stroke-dasharray="1,1" fill="none"/>
<g transform="translate(46.8,751.8)"><rect x="0.4" y="0.4" width="12" height="12" rx="1" fill="#f2f2f2" stroke="#c8c8c8" stroke-width="0.8"/>
<path d="M1 12 v-3.500 l1.500 -2 l1 1.500 l1.500 -4 l1 3.500 l1.500 -2.500 l1 2.500 l1.500 -1.500 l1 2 v4z" fill="#8c8c8c"/>
<path d="M3 2 v4 M5.5 2 v2 M8 2 v3.500 M10.500 2 v4.500" stroke="#dcdcdc" stroke-width="0.8"/></g>
<path d="M39 772.2 h7" stroke="#9c9ca6" stroke-width="1" stroke-dasharray="1,1" fill="none"/>
<g transform="translate(46.8,765.8)"><rect x="0.4" y="0.4" width="12" height="12" rx="1" fill="#f2f2f2" stroke="#c8c8c8" stroke-width="0.8"/>
<path d="M1 12 v-3.500 l1.500 -2 l1 1.500 l1.500 -4 l1 3.500 l1.500 -2.500 l1 2.500 l1.500 -1.500 l1 2 v4z" fill="#8c8c8c"/>
<path d="M3 2 v4 M5.5 2 v2 M8 2 v3.500 M10.500 2 v4.500" stroke="#dcdcdc" stroke-width="0.8"/></g>
<path d="M39 787.2 h7" stroke="#9c9ca6" stroke-width="1" stroke-dasharray="1,1" fill="none"/>
<g transform="translate(46.8,780.8)"><rect x="0.4" y="0.4" width="12" height="12" rx="1" fill="#eaf1f8" stroke="#b8c4d0" stroke-width="0.8"/>
<rect x="1" y="7" width="11" height="5.200" fill="#1f6cb0"/>
<path d="M1.500 2 h2 v1.500 h-2z M5 1.500 h1.500 v1.500 h-1.500z M8 2.500 h2 v1.500 h-2z M3 4.500 h2 v1.500 h-2z M6.500 4.500 h2 v2 h-2z M10 5 h1.500 v2 h-1.500z M1.500 5.500 h1 v1.500 h-1z" fill="#2a78bd"/>
<path d="M2.500 8.500 h1.200 v1 h-1.200z M6 9 h1.500 v1 h-1.500z M9.500 8.300 h1 v1 h-1z" fill="#9cc4e6"/></g>
</svg>
<div class="tr" style="left:20px;top:217.500px">ROOT</div>
<div class="tr" style="left:34.500px;top:232px">Files</div>
<div class="tr" style="left:47.500px;top:246px">test.root</div>
<div class="tr" style="left:61.500px;top:261.4px">pulserVsChannel</div>
<div class="tr" style="left:61.500px;top:275.4px">lowEnergyMultiplicity</div>
<div class="tr" style="left:61.500px;top:290.4px">highEnergyMultiplicity</div>
<div class="tr" style="left:61.500px;top:304.4px">absPulserVsChannel</div>
<div class="tr" style="left:61.500px;top:318.4px">lowEnergyExEyDSSD0</div>
<div class="tr" style="left:61.500px;top:333.4px">xyMultiplicityDSSD0</div>
<div class="tr" style="left:61.500px;top:347.4px">lowEnergyXYDSSD0</div>
<div class="tr" style="left:61.500px;top:362.4px">lowEnergyAngleEDSSD0</div>
<div class="tr" style="left:61.500px;top:376.4px">lowEnergyEyTotalDSSD0</div>
<div class="tr" style="left:61.500px;top:390.4px">lowEnergyExTotalDSSD0</div>
<div class="tr" style="left:61.500px;top:405.4px">lowEnergyEyRateDSSD0</div>
<div class="tr" style="left:61.500px;top:419.4px">lowEnergyExRateDSSD0</div>
<div class="tr" style="left:61.500px;top:434.4px">lowEnergyExEyDSSD1</div>
<div class="tr" style="left:61.500px;top:448.4px">xyMultiplicityDSSD1</div>
<div class="tr" style="left:61.500px;top:462.4px">lowEnergyXYDSSD1</div>
<div class="tr" style="left:61.500px;top:477.4px">lowEnergyAngleEDSSD1</div>
<div class="tr" style="left:61.500px;top:491.4px">lowEnergyEyTotalDSSD1</div>
<div class="tr" style="left:61.500px;top:506.4px">lowEnergyExTotalDSSD1</div>
<div class="tr" style="left:61.500px;top:520.4px">lowEnergyEyRateDSSD1</div>
<div class="tr" style="left:61.500px;top:534.4px">lowEnergyExRateDSSD1</div>
<div class="tr" style="left:61.500px;top:549.4px">lowEnergyExEyDSSD2</div>
<div class="tr" style="left:61.500px;top:563.4px">xyMultiplicityDSSD2</div>
<div class="tr" style="left:61.500px;top:578.4px">lowEnergyXYDSSD2</div>
<div class="tr" style="left:61.500px;top:592.4px">lowEnergyAngleEDSSD2</div>
<div class="tr" style="left:61.500px;top:606.4px">lowEnergyEyTotalDSSD2</div>
<div class="tr" style="left:61.500px;top:621.4px">lowEnergyExTotalDSSD2</div>
<div class="tr" style="left:61.500px;top:635.4px">lowEnergyEyRateDSSD2</div>
<div class="tr" style="left:61.500px;top:650.4px">lowEnergyExRateDSSD2</div>
<div class="tr" style="left:61.500px;top:664.4px">lowEnergyExEyDSSD3</div>
<div class="tr" style="left:61.500px;top:678.4px">xyMultiplicityDSSD3</div>
<div class="tr" style="left:61.500px;top:693.4px">lowEnergyXYDSSD3</div>
<div class="tr" style="left:61.500px;top:707.4px">lowEnergyAngleEDSSD3</div>
<div class="tr" style="left:61.500px;top:722.4px">lowEnergyEyTotalDSSD3</div>
<div class="tr" style="left:61.500px;top:736.4px">lowEnergyExTotalDSSD3</div>
<div class="tr" style="left:61.500px;top:750.4px">lowEnergyEyRateDSSD3</div>
<div class="tr" style="left:61.500px;top:765.4px">lowEnergyExRateDSSD3</div>
<div class="tr" style="left:61.500px;top:779.4px">lowEnergyChannelADC</div>
</div>
<div id="sep"></div>
<svg id="plots" width="1716" height="930" viewBox="204 113 1716 930" style="position:absolute;left:204px;top:113px;font-family:'Liberation Sans',sans-serif" fill="#000">
<rect x="289.6" y="159.45" width="686.9" height="371.75" fill="#fff"/>
<path fill="#273da8" d="M303.34 292.5h13.74v1.25h-13.74zM303.34 307.25h13.74v1h-13.74zM317.08 299.25h13.74v4.5h-13.74zM317.08 306h13.74v1.75h-13.74zM330.81 298.25h13.74v1.25h-13.74zM330.81 305h13.74v1.25h-13.74zM330.81 309h13.74v1.25h-13.74zM344.55 299.5h13.74v0.75h-13.74zM344.55 307h13.74v1.5h-13.74zM358.29 294h13.74v5h-13.74zM372.03 293h13.74v6.25h-13.74zM385.77 296.25h13.74v3h-13.74zM399.5 297.25h13.74v1.5h-13.74zM426.98 298.25h13.74v1.25h-13.74zM454.46 299h13.74v1.25h-13.74zM468.19 299h13.74v1.25h-13.74zM481.93 295h13.74v1.25h-13.74zM509.41 295h13.74v1.25h-13.74zM303.34 324.5h13.74v2h-13.74zM303.34 350h13.74v1.5h-13.74zM303.34 360.75h13.74v2h-13.74zM303.34 385.25h13.74v1.5h-13.74zM303.34 400h13.74v1h-13.74zM303.34 402h13.74v1h-13.74zM317.08 378h13.74v0.75h-13.74zM330.81 350h13.74v1.5h-13.74zM330.81 400h13.74v1h-13.74zM536.88 292.5h13.74v1.5h-13.74zM536.88 295h13.74v1.5h-13.74zM317.08 192.5h13.74v2.25h-13.74zM330.81 225h13.74v1.75h-13.74zM454.46 213h13.74v0.88h-13.74zM303.34 400h13.74v0.75h-13.74zM303.34 401.75h13.74v1h-13.74zM303.34 410.5h13.74v3.25h-13.74zM303.34 429h13.74v1h-13.74zM303.34 432h13.74v2h-13.74zM303.34 444h13.74v4.25h-13.74zM303.34 451h13.74v11.25h-13.74zM303.34 463.75h13.74v4.25h-13.74zM303.34 469.75h13.74v3.25h-13.74zM303.34 474.25h13.74v5.75h-13.74zM303.34 484h13.74v7.5h-13.74zM303.34 492.75h13.74v4h-13.74zM303.34 498.75h13.74v22h-13.74zM317.08 411.25h13.74v1.75h-13.74zM317.08 429.25h13.74v2.5h-13.74zM317.08 457.5h13.74v1.25h-13.74zM317.08 465.75h13.74v1.25h-13.74zM317.08 473.25h13.74v1.5h-13.74zM317.08 487.25h13.74v1h-13.74zM317.08 492.5h13.74v21.5h-13.74zM317.08 515h13.74v7.75h-13.74zM330.81 400h13.74v1h-13.74zM330.81 503.25h13.74v1.75h-13.74zM330.81 508.75h13.74v1.25h-13.74zM330.81 512.5h13.74v0.75h-13.74zM330.81 515h13.74v7.75h-13.74zM344.55 515h13.74v7.75h-13.74zM358.29 487.5h13.74v1h-13.74zM358.29 512h13.74v10.75h-13.74zM372.03 496.25h13.74v13.75h-13.74zM372.03 512h13.74v10.75h-13.74zM385.77 492.5h13.74v1.5h-13.74zM385.77 506.25h13.74v1.75h-13.74zM385.77 512.5h13.74v9.5h-13.74zM399.5 496h13.74v3.75h-13.74zM399.5 508.75h13.74v13.25h-13.74zM413.24 491.25h13.74v2.75h-13.74zM413.24 496.25h13.74v17h-13.74zM413.24 514.75h13.74v6.25h-13.74zM426.98 457.25h13.74v1.75h-13.74zM426.98 497.75h13.74v1.75h-13.74zM426.98 514.75h13.74v6.25h-13.74zM440.72 475h13.74v1.25h-13.74zM440.72 503.75h13.74v1.25h-13.74zM440.72 512.75h13.74v1.25h-13.74zM440.72 514.75h13.74v6.25h-13.74zM454.46 514.75h13.74v6.25h-13.74zM468.19 469.75h13.74v1.25h-13.74zM468.19 480.5h13.74v2.25h-13.74zM468.19 486.5h13.74v3.5h-13.74zM468.19 491.25h13.74v4.75h-13.74zM468.19 498.5h13.74v1.5h-13.74zM468.19 502.5h13.74v20h-13.74zM481.93 487.25h13.74v1h-13.74zM481.93 492.75h13.74v1.25h-13.74zM481.93 496.75h13.74v27.75h-13.74zM495.67 506.25h13.74v2.5h-13.74zM495.67 517.5h13.74v6.5h-13.74zM509.41 487.25h13.74v1h-13.74zM509.41 497.75h13.74v26.75h-13.74zM523.15 497.75h13.74v1.75h-13.74zM523.15 508.75h13.74v1.25h-13.74zM536.88 501.75h13.74v1h-13.74zM536.88 509.75h13.74v11.5h-13.74zM550.62 487h13.74v1.25h-13.74zM550.62 509h13.74v3h-13.74zM550.62 514h13.74v6.75h-13.74zM564.36 492.5h13.74v1.5h-13.74zM564.36 505.75h13.74v1.75h-13.74zM564.36 509.5h13.74v2h-13.74zM564.36 512.75h13.74v5h-13.74zM564.36 520.5h13.74v2h-13.74zM578.1 491.75h13.74v2h-13.74zM578.1 500h13.74v2h-13.74zM578.1 503.75h13.74v13.75h-13.74zM578.1 519h13.74v4h-13.74zM591.84 502h13.74v1.5h-13.74zM591.84 510h13.74v11h-13.74zM605.57 508.75h13.74v12.25h-13.74zM619.31 497.75h13.74v5h-13.74zM619.31 509.75h13.74v11.25h-13.74zM633.05 503.75h13.74v1.75h-13.74zM633.05 509.5h13.74v2h-13.74zM633.05 513.25h13.74v2.5h-13.74zM633.05 517.5h13.74v5.25h-13.74zM646.79 499.75h13.74v1.25h-13.74zM646.79 508.75h13.74v1.25h-13.74zM646.79 517.5h13.74v3.5h-13.74zM660.53 491h13.74v1.25h-13.74zM660.53 500h13.74v1.25h-13.74zM660.53 502h13.74v3h-13.74zM660.53 510.75h13.74v10.25h-13.74zM674.26 492h13.74v2.75h-13.74zM674.26 500h13.74v4.5h-13.74zM674.26 514h13.74v7h-13.74zM688 498.25h13.74v1.5h-13.74zM688 501.5h13.74v1.25h-13.74zM688 515h13.74v6h-13.74zM701.74 503.75h13.74v1.25h-13.74zM701.74 515h13.74v6h-13.74zM715.48 503h13.74v2.25h-13.74zM715.48 516h13.74v5h-13.74zM729.22 517.5h13.74v3.5h-13.74zM742.95 513.5h13.74v3.5h-13.74zM742.95 518h13.74v3h-13.74zM756.69 518h13.74v3h-13.74zM770.43 519h13.74v1.75h-13.74zM784.17 517.5h13.74v3.75h-13.74zM797.91 518.75h13.74v2h-13.74zM811.64 518.75h13.74v2h-13.74zM825.38 518.25h13.74v1.75h-13.74z"/>
<path fill="#1063dc" d="M303.34 293.75h13.74v1.75h-13.74zM303.34 297.75h13.74v1.5h-13.74zM317.08 292.5h13.74v1.5h-13.74zM317.08 297.5h13.74v1.75h-13.74zM344.55 294h13.74v2.25h-13.74zM344.55 297.25h13.74v2.25h-13.74zM413.24 519h13.74v1.25h-13.74zM481.93 507h13.74v0.75h-13.74zM481.93 515.25h13.74v1.75h-13.74zM509.41 514h13.74v0.62h-13.74zM509.41 518h13.74v0.62h-13.74zM564.36 517.75h13.74v1h-13.74zM619.31 519h13.74v1h-13.74z"/>
<path fill="#1eafb3" d="M303.34 295.5h13.74v2.25h-13.74zM330.81 296.5h13.74v1.75h-13.74z"/>
<path fill="#273da8" fill-opacity="0.78" d="M303.34 299.25h13.74v1.25h-13.74zM303.34 305.25h13.74v1h-13.74zM303.34 317.25h13.74v0.75h-13.74zM317.08 310.25h13.74v1.25h-13.74zM317.08 314h13.74v1h-13.74zM330.81 310.5h13.74v1.25h-13.74zM344.55 317h13.74v0.75h-13.74zM358.29 314h13.74v0.75h-13.74zM413.24 293h13.74v0.75h-13.74zM426.98 317h13.74v0.75h-13.74zM481.93 301.25h13.74v1.5h-13.74zM481.93 334.75h13.74v1h-13.74zM495.67 293h13.74v0.75h-13.74zM509.41 298.25h13.74v0.62h-13.74zM509.41 306.25h13.74v0.62h-13.74zM509.41 347h13.74v0.75h-13.74zM523.15 298.25h13.74v0.62h-13.74zM523.15 375.25h13.74v0.62h-13.74zM303.34 358h13.74v0.75h-13.74zM303.34 369.25h13.74v0.75h-13.74zM303.34 373.25h13.74v0.62h-13.74zM303.34 397.25h13.74v0.75h-13.74zM317.08 399.25h13.74v0.62h-13.74zM330.81 346h13.74v0.75h-13.74zM330.81 355h13.74v1h-13.74zM330.81 366.25h13.74v0.62h-13.74zM344.55 350.25h13.74v0.62h-13.74zM358.29 355h13.74v1h-13.74zM372.03 327h13.74v0.75h-13.74zM399.5 399.25h13.74v0.62h-13.74zM550.62 391h13.74v0.75h-13.74zM578.1 322.75h13.74v1h-13.74zM605.57 341.25h13.74v1.75h-13.74zM701.74 309h13.74v0.75h-13.74zM729.22 314h13.74v0.75h-13.74zM481.93 236h13.74v1h-13.74zM784.17 361h27.48v0.75h-27.48zM303.34 415.25h13.74v1.25h-13.74zM303.34 426.25h13.74v1.5h-13.74zM303.34 438h13.74v0.75h-13.74zM303.34 482h13.74v1h-13.74zM317.08 438.25h13.74v0.62h-13.74zM317.08 443.25h13.74v0.75h-13.74zM317.08 451.25h13.74v0.75h-13.74zM317.08 453.25h13.74v1h-13.74zM317.08 461.25h13.74v1h-13.74zM317.08 463.25h13.74v0.75h-13.74zM317.08 471.5h13.74v1.25h-13.74zM317.08 479.25h13.74v0.75h-13.74zM317.08 489.75h13.74v0.75h-13.74zM330.81 433.25h13.74v1h-13.74zM330.81 474.25h13.74v0.62h-13.74zM330.81 491.25h13.74v0.75h-13.74zM330.81 495.5h13.74v0.75h-13.74zM344.55 463.25h13.74v0.75h-13.74zM344.55 512h13.74v1.75h-13.74zM358.29 503.25h13.74v0.75h-13.74zM372.03 488.5h13.74v2.25h-13.74zM385.77 431.25h13.74v0.75h-13.74zM385.77 498.5h13.74v1.25h-13.74zM399.5 483h13.74v1h-13.74zM399.5 501.5h13.74v1.25h-13.74zM399.5 523.25h13.74v0.75h-13.74zM413.24 482.25h13.74v0.75h-13.74zM426.98 494h13.74v0.75h-13.74zM426.98 502h13.74v0.75h-13.74zM426.98 510.25h13.74v1.5h-13.74zM440.72 505.25h13.74v2.75h-13.74zM468.19 442.25h13.74v0.75h-13.74zM481.93 463h13.74v0.75h-13.74zM495.67 419.25h13.74v0.75h-13.74zM495.67 503.25h13.74v0.75h-13.74zM495.67 509h13.74v1h-13.74zM509.41 483h13.74v0.75h-13.74zM509.41 491.25h13.74v0.75h-13.74zM509.41 494h13.74v0.75h-13.74zM509.41 495.75h13.74v1.25h-13.74zM523.15 482h13.74v0.75h-13.74zM523.15 510.5h13.74v1h-13.74zM523.15 513.25h13.74v1h-13.74zM523.15 516.25h13.74v1h-13.74zM523.15 519.25h13.74v2h-13.74zM523.15 523h13.74v0.75h-13.74zM536.88 495h13.74v0.75h-13.74zM536.88 506h13.74v1h-13.74zM550.62 523h13.74v0.75h-13.74zM564.36 491h13.74v1.25h-13.74zM564.36 498.25h13.74v1.75h-13.74zM578.1 478h13.74v1h-13.74zM578.1 489.75h13.74v1h-13.74zM591.84 523h13.74v0.75h-13.74zM605.57 471h13.74v0.75h-13.74zM605.57 474h13.74v0.75h-13.74zM605.57 502h13.74v0.75h-13.74zM605.57 506.5h13.74v1.5h-13.74zM633.05 494h13.74v1h-13.74zM633.05 502h13.74v0.75h-13.74zM646.79 479h13.74v0.75h-13.74zM646.79 507h13.74v1.25h-13.74zM646.79 513.75h13.74v1h-13.74zM660.53 494h13.74v1.75h-13.74zM660.53 508.25h13.74v2.5h-13.74zM674.26 489.75h13.74v1h-13.74zM674.26 498h13.74v1.75h-13.74zM674.26 507.5h13.74v3h-13.74zM674.26 510.5h13.74v1.25h-13.74zM688 504.25h13.74v0.75h-13.74zM701.74 471h13.74v0.75h-13.74zM701.74 486h13.74v0.75h-13.74zM715.48 507h13.74v0.75h-13.74zM715.48 523h13.74v0.75h-13.74zM756.69 514.75h13.74v0.75h-13.74zM756.69 516.75h13.74v1.25h-13.74zM770.43 515h13.74v0.75h-13.74zM839.12 519.25h13.74v1h-13.74z"/>
<path fill="#273da8" fill-opacity="0.52" d="M303.34 302.75h13.74v1h-13.74zM303.34 310.75h13.74v1h-13.74zM303.34 314.75h13.74v1h-13.74zM317.08 303.75h13.74v1h-13.74zM317.08 312h13.74v1h-13.74zM317.08 315.75h13.74v1h-13.74zM330.81 302.75h13.74v1.25h-13.74zM330.81 311.75h13.74v1h-13.74zM344.55 303.25h13.74v1.25h-13.74zM358.29 300h13.74v1.25h-13.74zM358.29 308h13.74v1h-13.74zM399.5 311.25h13.74v1.5h-13.74zM440.72 298.75h13.74v1h-13.74zM440.72 304.25h13.74v1.25h-13.74zM454.46 302.75h13.74v1h-13.74zM481.93 299.25h13.74v1.25h-13.74zM481.93 310.75h13.74v1h-13.74zM495.67 296.25h13.74v1h-13.74zM495.67 300.25h13.74v1h-13.74zM495.67 308.25h13.74v1h-13.74zM509.41 292.25h13.74v1.25h-13.74zM509.41 300.5h13.74v1h-13.74zM523.15 340.25h13.74v1h-13.74zM303.34 356h13.74v0.75h-13.74zM303.34 404h13.74v1h-13.74zM317.08 375.75h13.74v1h-13.74zM317.08 391.75h13.74v1h-13.74zM330.81 338.75h13.74v1.5h-13.74zM330.81 340.25h13.74v0.75h-13.74zM330.81 351.5h13.74v1.75h-13.74zM330.81 404.25h13.74v0.75h-13.74zM564.36 296.25h13.74v1h-13.74zM564.36 300h13.74v1.25h-13.74zM564.36 302.75h13.74v1.25h-13.74zM660.53 292.25h13.74v1.25h-13.74zM729.22 327.5h13.74v1.25h-13.74zM756.69 315.25h13.74v1.5h-13.74zM330.81 226.75h13.74v1.5h-13.74zM344.55 262.75h13.74v1h-13.74zM578.1 227h13.74v1h-13.74zM715.48 227h13.74v1h-13.74zM564.36 262.5h13.74v1h-13.74zM770.43 320h13.74v1h-13.74zM523.15 412h13.74v1h-13.74zM303.34 403.75h13.74v0.75h-13.74zM303.34 407.75h13.74v1h-13.74zM303.34 430.5h13.74v1.25h-13.74zM303.34 436.25h13.74v1h-13.74zM303.34 462.25h13.74v1.5h-13.74zM303.34 468h13.74v1.75h-13.74zM303.34 473h13.74v1.25h-13.74zM303.34 491.5h13.74v1.25h-13.74zM303.34 497h13.74v1.5h-13.74zM317.08 407.75h13.74v1h-13.74zM317.08 416.25h13.74v1h-13.74zM317.08 454.5h13.74v3h-13.74zM330.81 404.25h13.74v1.25h-13.74zM330.81 476.5h13.74v1.25h-13.74zM330.81 488.5h13.74v1.25h-13.74zM330.81 499.5h13.74v2h-13.74zM330.81 510.5h13.74v1.25h-13.74zM344.55 500h13.74v1.5h-13.74zM344.55 513.5h13.74v1.25h-13.74zM358.29 424.25h13.74v1.25h-13.74zM358.29 456.5h13.74v1.25h-13.74zM358.29 500.25h13.74v1.25h-13.74zM358.29 507.5h13.74v3h-13.74zM372.03 412.25h13.74v1.25h-13.74zM372.03 448.5h13.74v1.25h-13.74zM372.03 477.5h13.74v1.25h-13.74zM372.03 484.5h13.74v2h-13.74zM372.03 510.5h13.74v1.25h-13.74zM372.03 525.5h13.74v1.25h-13.74zM385.77 508.25h13.74v2h-13.74zM399.5 484.25h13.74v1.5h-13.74zM399.5 489.25h13.74v1.25h-13.74zM413.24 513.25h13.74v1.5h-13.74zM426.98 479.5h13.74v1.25h-13.74zM426.98 512.25h13.74v2h-13.74zM454.46 513.25h13.74v1.25h-13.74zM468.19 412.25h13.74v1.25h-13.74zM468.19 467.5h13.74v2h-13.74zM468.19 484.5h13.74v2h-13.74zM481.93 465.25h13.74v1h-13.74zM481.93 484.5h13.74v1.25h-13.74zM495.67 448.5h13.74v1.25h-13.74zM495.67 513h13.74v1h-13.74zM495.67 524.25h13.74v1.25h-13.74zM523.15 412h13.74v1.25h-13.74zM523.15 468.25h13.74v1.5h-13.74zM523.15 512h13.74v1h-13.74zM523.15 514.75h13.74v1h-13.74zM523.15 517.75h13.74v1.25h-13.74zM536.88 499.5h13.74v1.75h-13.74zM536.88 507.75h13.74v1.75h-13.74zM550.62 491.5h13.74v1.25h-13.74zM564.36 489.25h13.74v1.25h-13.74zM564.36 500h13.74v1.5h-13.74zM564.36 507.5h13.74v1.25h-13.74zM564.36 518.75h13.74v1.5h-13.74zM564.36 524.25h13.74v1.25h-13.74zM578.1 479.5h13.74v1.25h-13.74zM578.1 517.75h13.74v1h-13.74zM578.1 525h13.74v1.25h-13.74zM591.84 495.5h13.74v2.75h-13.74zM591.84 507h13.74v1.25h-13.74zM605.57 505h13.74v1.25h-13.74zM619.31 489h13.74v1.25h-13.74zM619.31 495.5h13.74v2h-13.74zM633.05 476.25h13.74v1.5h-13.74zM633.05 498.75h13.74v1h-13.74zM633.05 507.25h13.74v1.5h-13.74zM646.79 495.5h13.74v1.25h-13.74zM660.53 488h13.74v1.5h-13.74zM660.53 496h13.74v1.5h-13.74zM660.53 505.25h13.74v2.5h-13.74zM674.26 512.25h13.74v1.75h-13.74zM688 508.25h13.74v1.5h-13.74zM688 513h13.74v1.5h-13.74zM701.74 508.25h13.74v1.5h-13.74zM701.74 513h13.74v1h-13.74zM715.48 514h13.74v1h-13.74zM729.22 512.5h13.74v1.5h-13.74zM742.95 517h13.74v1h-13.74zM756.69 511.5h13.74v1h-13.74zM770.43 499.75h13.74v1h-13.74zM770.43 517.5h13.74v0.75h-13.74zM811.64 517.25h13.74v0.75h-13.74zM825.38 513.25h13.74v1.25h-13.74zM825.38 520.75h13.74v0.75h-13.74zM839.12 520.75h13.74v0.75h-13.74z"/>
<path fill="#f9fb0e" d="M317.08 294.5h13.74v3h-13.74z"/>
<path fill="#1063dc" fill-opacity="0.5" d="M330.81 292.25h13.74v1.5h-13.74z"/>
<path fill="#2eb7a4" d="M330.81 293.75h13.74v1.75h-13.74z"/>
<path fill="#96be71" d="M330.81 295.5h13.74v1h-13.74z"/>
<path fill="#1271d9" d="M344.55 296.25h13.74v1h-13.74zM481.93 517.5h13.74v2h-13.74z"/>
<path fill="#ffffff" fill-opacity="0.7" d="M317.08 501.25h13.74v1.25h-13.74zM317.08 508.25h13.74v1.5h-13.74zM344.55 519.25h13.74v1h-13.74zM372.03 500h13.74v1.5h-13.74zM372.03 517.75h13.74v1.25h-13.74zM413.24 501h13.74v1.25h-13.74zM454.46 518h13.74v1h-13.74zM605.57 513.75h13.74v1h-13.74z"/>
<rect x="289.6" y="159.45" width="686.9" height="371.75" fill="none" stroke="#000" stroke-width="1"/>
<path d="M289.6 531.2h25.7M289.6 521.91h12.9M289.6 512.61h12.9M289.6 503.32h12.9M289.6 494.03h25.7M289.6 484.73h12.9M289.6 475.44h12.9M289.6 466.14h12.9M289.6 456.85h25.7M289.6 447.56h12.9M289.6 438.26h12.9M289.6 428.97h12.9M289.6 419.68h25.7M289.6 410.38h12.9M289.6 401.09h12.9M289.6 391.79h12.9M289.6 382.5h25.7M289.6 373.21h12.9M289.6 363.91h12.9M289.6 354.62h12.9M289.6 345.33h25.7M289.6 336.03h12.9M289.6 326.74h12.9M289.6 317.44h12.9M289.6 308.15h25.7M289.6 298.86h12.9M289.6 289.56h12.9M289.6 280.27h12.9M289.6 270.98h25.7M289.6 261.68h12.9M289.6 252.39h12.9M289.6 243.09h12.9M289.6 233.8h25.7M289.6 224.51h12.9M289.6 215.21h12.9M289.6 205.92h12.9M289.6 196.62h25.7M289.6 187.33h12.9M289.6 178.04h12.9M289.6 168.74h12.9M289.6 159.45h25.7M289.6 531.2v-13.9M323.95 531.2v-7M358.29 531.2v-7M392.63 531.2v-7M426.98 531.2v-13.9M461.33 531.2v-7M495.67 531.2v-7M530.01 531.2v-7M564.36 531.2v-13.9M598.71 531.2v-7M633.05 531.2v-7M667.39 531.2v-7M701.74 531.2v-13.9M736.09 531.2v-7M770.43 531.2v-7M804.77 531.2v-7M839.12 531.2v-13.9M873.47 531.2v-7M907.81 531.2v-7M942.15 531.2v-7M976.5 531.2v-13.9" stroke="#000" stroke-width="1" fill="none" opacity="0.85"/>
<text x="287.2" y="535.5" text-anchor="end" font-size="16">0</text>
<text x="287.2" y="498.33" text-anchor="end" font-size="16">2</text>
<text x="287.2" y="461.15" text-anchor="end" font-size="16">4</text>
<text x="287.2" y="423.98" text-anchor="end" font-size="16">6</text>
<text x="287.2" y="386.8" text-anchor="end" font-size="16">8</text>
<text x="287.2" y="349.63" text-anchor="end" font-size="16">10</text>
<text x="287.2" y="312.45" text-anchor="end" font-size="16">12</text>
<text x="287.2" y="275.28" text-anchor="end" font-size="16">14</text>
<text x="287.2" y="238.1" text-anchor="end" font-size="16">16</text>
<text x="287.2" y="200.93" text-anchor="end" font-size="16">18</text>
<text x="287.2" y="164.45" text-anchor="end" font-size="16">20</text>
<text x="289.6" y="548" text-anchor="middle" font-size="16">0</text>
<text x="426.98" y="548" text-anchor="middle" font-size="16">2</text>
<text x="564.36" y="548" text-anchor="middle" font-size="16">4</text>
<text x="701.74" y="548" text-anchor="middle" font-size="16">6</text>
<text x="839.12" y="548" text-anchor="middle" font-size="16">8</text>
<text x="976.5" y="548" text-anchor="middle" font-size="16">10</text>
<text x="294.1" y="154.85" font-size="16">×10<tspan font-size="9.5" dy="-4.4">3</tspan></text>
<rect x="984.5" y="512.61" width="35" height="18.89" fill="#273da8"/>
<rect x="984.5" y="494.03" width="35" height="18.89" fill="#1751cb"/>
<rect x="984.5" y="475.44" width="35" height="18.89" fill="#1063dc"/>
<rect x="984.5" y="456.85" width="35" height="18.89" fill="#1271d9"/>
<rect x="984.5" y="438.26" width="35" height="18.89" fill="#1480d6"/>
<rect x="984.5" y="419.68" width="35" height="18.89" fill="#0e8ed1"/>
<rect x="984.5" y="401.09" width="35" height="18.89" fill="#099dcc"/>
<rect x="984.5" y="382.5" width="35" height="18.89" fill="#0da7c3"/>
<rect x="984.5" y="363.91" width="35" height="18.89" fill="#1eafb3"/>
<rect x="984.5" y="345.33" width="35" height="18.89" fill="#2eb7a4"/>
<rect x="984.5" y="326.74" width="35" height="18.89" fill="#52ba91"/>
<rect x="984.5" y="308.15" width="35" height="18.89" fill="#74bd80"/>
<rect x="984.5" y="289.56" width="35" height="18.89" fill="#96be71"/>
<rect x="984.5" y="270.98" width="35" height="18.89" fill="#b4bd65"/>
<rect x="984.5" y="252.39" width="35" height="18.89" fill="#d1bb59"/>
<rect x="984.5" y="233.8" width="35" height="18.89" fill="#e3c04a"/>
<rect x="984.5" y="215.21" width="35" height="18.89" fill="#f5c63a"/>
<rect x="984.5" y="196.62" width="35" height="18.89" fill="#fdd32a"/>
<rect x="984.5" y="178.04" width="35" height="18.89" fill="#fbe81c"/>
<rect x="984.5" y="159.45" width="35" height="18.89" fill="#f9fb0e"/>
<path d="M1019.5 159.45V531.2" stroke="#000" stroke-width="1" opacity="0.8"/>
<text x="1022.5" y="535.9" font-size="16">0</text>
<text x="1022.5" y="498.87" font-size="16">20</text>
<text x="1022.5" y="461.85" font-size="16">40</text>
<text x="1022.5" y="424.82" font-size="16">60</text>
<text x="1022.5" y="387.79" font-size="16">80</text>
<text x="1022.5" y="350.77" font-size="16">100</text>
<text x="1022.5" y="313.74" font-size="16">120</text>
<text x="1022.5" y="276.71" font-size="16">140</text>
<text x="1022.5" y="239.68" font-size="16">160</text>
<text x="1022.5" y="202.66" font-size="16">180</text>
<text x="1022.5" y="165.63" font-size="16">200</text>
<path d="M1019.5 531.2h-19M1019.5 494.17h-19M1019.5 457.15h-19M1019.5 420.12h-19M1019.5 383.09h-19M1019.5 346.07h-19M1019.5 309.04h-19M1019.5 272.01h-19M1019.5 234.98h-19M1019.5 197.96h-19M1019.5 160.93h-19" stroke="#000" stroke-width="1" opacity="0.85"/>
<rect x="873.54" y="143.45" width="171" height="123" fill="#fff" stroke="#000" stroke-width="1" stroke-opacity="0.85"/>
<path d="M873.54 163.95H1044.54" stroke="#000" stroke-width="1" stroke-opacity="0.85"/>
<text x="959.04" y="156.85" text-anchor="middle" font-size="12.8">lowEnergyAngleEDSSD0</text>
<text x="882.54" y="177.75" font-size="12.8">Entries</text>
<text x="1035.54" y="177.75" text-anchor="end" font-size="12.8">3496</text>
<text x="882.54" y="198.25" font-size="12.8">Mean x</text>
<text x="1035.54" y="198.25" text-anchor="end" font-size="12.8">1.911</text>
<text x="882.54" y="218.75" font-size="12.8">Mean y</text>
<text x="1035.54" y="218.75" text-anchor="end" font-size="12.8">6576</text>
<text x="882.54" y="239.25" font-size="12.8">Std Dev x</text>
<text x="1035.54" y="239.25" text-anchor="end" font-size="12.8">1.877</text>
<text x="882.54" y="259.75" font-size="12.8">Std Dev y</text>
<text x="1035.54" y="259.75" text-anchor="end" font-size="12.8">5708</text>
<rect x="1147.6" y="159.45" width="686.9" height="371.75" fill="#fff"/>
<path fill="#1751cb" d="M1326.19 231.5h13.74v1.5h-13.74zM1367.41 219.5h13.74v1.5h-13.74zM1394.88 332h13.74v1.25h-13.74zM1422.36 242h13.74v2h-13.74zM1436.1 347.75h13.74v1.25h-13.74zM1436.1 353.25h13.74v1.5h-13.74zM1477.31 336h13.74v1.25h-13.74zM1491.05 387.75h13.74v1.25h-13.74zM1546 440.5h13.74v1.5h-13.74zM1628.43 376.5h13.74v1.25h-13.74zM1408.62 478h13.74v0.75h-13.74zM1422.36 510.5h13.74v1.5h-13.74zM1449.84 510h13.74v1.75h-13.74zM1284.98 518h13.74v1.75h-13.74zM1298.72 518h13.74v3.25h-13.74zM1326.19 515.75h13.74v2.5h-13.74zM1353.67 521.5h13.74v1h-13.74zM1367.41 515h13.74v1h-13.74zM1381.15 514h13.74v1.5h-13.74zM1394.88 522h13.74v1.75h-13.74zM1408.62 513.5h13.74v1.25h-13.74zM1408.62 515.75h13.74v2h-13.74zM1436.1 523h13.74v1.5h-13.74zM1449.84 513.75h13.74v2.75h-13.74zM1449.84 521h13.74v1.75h-13.74zM1463.57 522.25h13.74v2.25h-13.74zM1518.53 501.75h13.74v1.25h-13.74zM1532.26 487.25h13.74v1.25h-13.74zM1532.26 508.75h13.74v1.5h-13.74zM1546 440.75h13.74v1.5h-13.74zM1559.74 504.25h13.74v1.5h-13.74zM1600.95 487.25h13.74v1.25h-13.74zM1600.95 513.75h13.74v1.25h-13.74zM1614.69 504.25h13.74v1.5h-13.74zM1518.53 513h13.74v1.75h-13.74zM1532.26 515h13.74v1.75h-13.74zM1546 514.25h13.74v2.5h-13.74zM1559.74 514.5h13.74v1.25h-13.74zM1559.74 520.75h13.74v2h-13.74zM1573.48 521.25h13.74v1.5h-13.74zM1600.95 515.5h13.74v1h-13.74zM1642.17 519.75h13.74v1.75h-13.74zM1655.91 516h13.74v3.75h-13.74z"/>
<path fill="#1751cb" fill-opacity="0.78" d="M1367.41 375h13.74v0.75h-13.74zM1394.88 218h13.74v0.75h-13.74zM1408.62 339h13.74v1h-13.74zM1408.62 373.25h13.74v0.75h-13.74zM1422.36 349h13.74v0.75h-13.74zM1381.15 322.75h13.74v1h-13.74zM1436.1 333h13.74v0.75h-13.74zM1491.05 393h13.74v0.75h-13.74zM1491.05 438h13.74v0.75h-13.74zM1504.79 337h13.74v0.75h-13.74zM1518.53 397h13.74v0.75h-13.74zM1559.74 421.25h13.74v1h-13.74zM1573.48 321h13.74v0.75h-13.74zM1422.36 506.25h13.74v0.75h-13.74zM1436.1 507h13.74v0.75h-13.74zM1449.84 508.25h13.74v1.5h-13.74zM1491.05 438h13.74v0.75h-13.74zM1312.46 514.25h13.74v1.25h-13.74zM1367.41 516.25h13.74v1.25h-13.74zM1367.41 523h13.74v0.75h-13.74zM1449.84 523h13.74v1h-13.74zM1504.79 523h13.74v0.75h-13.74zM1518.53 467.25h13.74v0.62h-13.74zM1546 494.25h13.74v0.75h-13.74zM1559.74 421.5h13.74v1h-13.74zM1559.74 491.25h13.74v0.75h-13.74zM1559.74 507.25h13.74v0.75h-13.74zM1573.48 494.25h13.74v0.75h-13.74zM1573.48 512h13.74v0.75h-13.74zM1600.95 483.25h13.74v0.75h-13.74zM1642.17 507.25h13.74v0.75h-13.74z"/>
<path fill="#1751cb" fill-opacity="0.52" d="M1367.41 380.5h13.74v1h-13.74zM1394.88 444.5h13.74v1h-13.74zM1436.1 327.75h13.74v1h-13.74zM1339.93 456.5h13.74v1h-13.74zM1463.57 412.25h13.74v1h-13.74zM1463.57 443.75h13.74v1h-13.74zM1477.31 436.25h13.74v1h-13.74zM1491.05 343.75h13.74v1h-13.74zM1491.05 420.25h13.74v1h-13.74zM1504.79 315.5h13.74v1.25h-13.74zM1518.53 316.5h13.74v1h-13.74zM1518.53 340.5h13.74v1h-13.74zM1532.26 355.75h13.74v1h-13.74zM1573.48 315.5h13.74v1.25h-13.74zM1642.17 331.75h13.74v1h-13.74zM1642.17 372.5h13.74v1h-13.74zM1339.93 456.25h13.74v1h-13.74zM1339.93 495.75h13.74v1h-13.74zM1394.88 444.25h13.74v1h-13.74zM1408.62 483.75h13.74v1h-13.74zM1408.62 509.5h13.74v1.25h-13.74zM1422.36 488.5h13.74v1.5h-13.74zM1422.36 499.75h13.74v1h-13.74zM1463.57 412.25h13.74v1.25h-13.74zM1463.57 443.75h13.74v1h-13.74zM1477.31 436.25h13.74v1.25h-13.74zM1477.31 488.5h13.74v1.5h-13.74zM1491.05 420.25h13.74v1.25h-13.74zM1491.05 507.75h13.74v1h-13.74zM1504.79 508.5h13.74v1.25h-13.74zM1284.98 520.5h13.74v1h-13.74zM1298.72 513.25h13.74v1h-13.74zM1339.93 512.75h13.74v1.25h-13.74zM1339.93 520.75h13.74v1h-13.74zM1367.41 512.75h13.74v1.25h-13.74zM1449.84 524.5h13.74v1.5h-13.74zM1477.31 512.75h13.74v1h-13.74zM1532.26 510.75h13.74v1.25h-13.74zM1546 477.5h13.74v1h-13.74zM1559.74 513h13.74v1.25h-13.74zM1573.48 509.5h13.74v1.25h-13.74zM1587.22 472.5h13.74v1.5h-13.74zM1600.95 508.75h13.74v1.25h-13.74zM1614.69 513.5h13.74v1.25h-13.74zM1655.91 501.5h13.74v1h-13.74zM1669.64 520.75h13.74v1h-13.74z"/>
<path fill="#1271d9" d="M1408.62 223h13.74v1.25h-13.74zM1504.79 350.75h13.74v1h-13.74zM1436.1 483h13.74v0.75h-13.74zM1326.19 514h13.74v0.75h-13.74zM1326.19 518.75h13.74v1.75h-13.74zM1353.67 515.25h13.74v1.75h-13.74zM1353.67 520.5h13.74v1h-13.74zM1367.41 517.75h13.74v3.25h-13.74zM1463.57 513.75h13.74v3h-13.74zM1491.05 513.25h13.74v3.5h-13.74zM1559.74 516h13.74v1h-13.74zM1600.95 518.75h13.74v2.5h-13.74zM1614.69 519.5h13.74v1h-13.74zM1669.64 518h13.74v0.62h-13.74z"/>
<path fill="#1480d6" d="M1284.98 515h13.74v0.62h-13.74zM1312.46 518.75h13.74v1.75h-13.74zM1339.93 517.25h13.74v1.75h-13.74zM1436.1 515.75h13.74v1.25h-13.74zM1477.31 515h13.74v2h-13.74zM1477.31 521.25h13.74v1.25h-13.74zM1504.79 514.5h13.74v2h-13.74zM1518.53 514.75h13.74v1.25h-13.74z"/>
<path fill="#0e8ed1" fill-opacity="0.5" d="M1339.93 519h13.74v1.5h-13.74zM1381.15 521h13.74v0.75h-13.74zM1408.62 521h13.74v0.75h-13.74zM1504.79 521h13.74v1h-13.74zM1518.53 521h13.74v0.75h-13.74zM1532.26 521h13.74v0.75h-13.74zM1546 521h13.74v0.75h-13.74z"/>
<path fill="#0e8ed1" d="M1353.67 517.25h13.74v1.25h-13.74zM1394.88 521h13.74v0.75h-13.74zM1408.62 518h13.74v1.25h-13.74zM1422.36 517h13.74v1.25h-13.74zM1463.57 521.5h13.74v0.75h-13.74zM1587.22 518.25h13.74v1.5h-13.74zM1600.95 516.75h13.74v1.75h-13.74zM1614.69 516h13.74v2.25h-13.74z"/>
<path fill="#1eafb3" d="M1353.67 518.5h13.74v2h-13.74zM1449.84 519.75h13.74v1.25h-13.74zM1491.05 517h13.74v1.25h-13.74zM1518.53 518h13.74v1h-13.74zM1546 517h13.74v2h-13.74zM1573.48 520.25h13.74v1h-13.74zM1614.69 518.25h13.74v1.25h-13.74z"/>
<path fill="#0da7c3" d="M1381.15 517.25h13.74v1.75h-13.74zM1587.22 519.75h13.74v1.5h-13.74z"/>
<path fill="#2eb7a4" d="M1381.15 519h13.74v2h-13.74zM1436.1 517h13.74v2h-13.74zM1504.79 519.75h13.74v1.25h-13.74z"/>
<path fill="#1063dc" d="M1394.88 514h13.74v4.25h-13.74zM1422.36 515h13.74v1.75h-13.74zM1477.31 522.5h13.74v1h-13.74zM1491.05 521h13.74v1.5h-13.74zM1532.26 512.5h13.74v1.25h-13.74zM1532.26 516.75h13.74v1.75h-13.74zM1559.74 517h13.74v1.75h-13.74zM1573.48 514.5h13.74v3.75h-13.74zM1587.22 514h13.74v4.25h-13.74zM1628.43 515.25h13.74v5.25h-13.74zM1642.17 515.75h13.74v1.25h-13.74zM1642.17 518.5h13.74v1.25h-13.74z"/>
<path fill="#f9fb0e" d="M1394.88 518.75h13.74v2.25h-13.74zM1477.31 518.25h13.74v3h-13.74z"/>
<path fill="#b4bd65" d="M1408.62 519.25h13.74v1.75h-13.74z"/>
<path fill="#e3c04a" d="M1422.36 518.25h13.74v2.75h-13.74zM1518.53 519h13.74v2.25h-13.74z"/>
<path fill="#1eafb3" fill-opacity="0.5" d="M1422.36 521h13.74v1h-13.74zM1436.1 521h13.74v1h-13.74z"/>
<path fill="#d1bb59" d="M1436.1 519h13.74v2h-13.74zM1491.05 518.25h13.74v1.5h-13.74zM1559.74 519h13.74v1.75h-13.74z"/>
<path fill="#52ba91" d="M1449.84 516.75h13.74v3h-13.74zM1463.57 517h13.74v1.5h-13.74zM1491.05 519.75h13.74v1.25h-13.74zM1532.26 518.75h13.74v2.25h-13.74z"/>
<path fill="#1063dc" fill-opacity="0.5" d="M1463.57 512.5h13.74v1.25h-13.74zM1642.17 517h13.74v1.5h-13.74z"/>
<path fill="#fdd32a" d="M1463.57 518.5h13.74v2.75h-13.74z"/>
<path fill="#099dcc" d="M1477.31 517.25h13.74v1h-13.74z"/>
<path fill="#1480d6" fill-opacity="0.5" d="M1504.79 513h13.74v1.25h-13.74zM1614.69 515h13.74v1h-13.74zM1614.69 520.5h13.74v1h-13.74z"/>
<path fill="#f5c63a" d="M1504.79 516.75h13.74v3h-13.74z"/>
<path fill="#fbe81c" d="M1546 519.25h13.74v1.75h-13.74zM1573.48 518.75h13.74v1.5h-13.74z"/>
<rect x="1147.6" y="159.45" width="686.9" height="371.75" fill="none" stroke="#000" stroke-width="1"/>
<path d="M1147.6 531.2h25.7M1147.6 521.91h12.9M1147.6 512.61h12.9M1147.6 503.32h12.9M1147.6 494.03h25.7M1147.6 484.73h12.9M1147.6 475.44h12.9M1147.6 466.14h12.9M1147.6 456.85h25.7M1147.6 447.56h12.9M1147.6 438.26h12.9M1147.6 428.97h12.9M1147.6 419.68h25.7M1147.6 410.38h12.9M1147.6 401.09h12.9M1147.6 391.79h12.9M1147.6 382.5h25.7M1147.6 373.21h12.9M1147.6 363.91h12.9M1147.6 354.62h12.9M1147.6 345.33h25.7M1147.6 336.03h12.9M1147.6 326.74h12.9M1147.6 317.44h12.9M1147.6 308.15h25.7M1147.6 298.86h12.9M1147.6 289.56h12.9M1147.6 280.27h12.9M1147.6 270.98h25.7M1147.6 261.68h12.9M1147.6 252.39h12.9M1147.6 243.09h12.9M1147.6 233.8h25.7M1147.6 224.51h12.9M1147.6 215.21h12.9M1147.6 205.92h12.9M1147.6 196.62h25.7M1147.6 187.33h12.9M1147.6 178.04h12.9M1147.6 168.74h12.9M1147.6 159.45h25.7M1147.6 531.2v-13.9M1181.94 531.2v-7M1216.29 531.2v-7M1250.63 531.2v-7M1284.98 531.2v-13.9M1319.32 531.2v-7M1353.67 531.2v-7M1388.01 531.2v-7M1422.36 531.2v-13.9M1456.7 531.2v-7M1491.05 531.2v-7M1525.39 531.2v-7M1559.74 531.2v-13.9M1594.09 531.2v-7M1628.43 531.2v-7M1662.78 531.2v-7M1697.12 531.2v-13.9M1731.46 531.2v-7M1765.81 531.2v-7M1800.15 531.2v-7M1834.5 531.2v-13.9" stroke="#000" stroke-width="1" fill="none" opacity="0.85"/>
<text x="1145.2" y="535.5" text-anchor="end" font-size="16">0</text>
<text x="1145.2" y="498.33" text-anchor="end" font-size="16">2</text>
<text x="1145.2" y="461.15" text-anchor="end" font-size="16">4</text>
<text x="1145.2" y="423.98" text-anchor="end" font-size="16">6</text>
<text x="1145.2" y="386.8" text-anchor="end" font-size="16">8</text>
<text x="1145.2" y="349.63" text-anchor="end" font-size="16">10</text>
<text x="1145.2" y="312.45" text-anchor="end" font-size="16">12</text>
<text x="1145.2" y="275.28" text-anchor="end" font-size="16">14</text>
<text x="1145.2" y="238.1" text-anchor="end" font-size="16">16</text>
<text x="1145.2" y="200.93" text-anchor="end" font-size="16">18</text>
<text x="1145.2" y="164.45" text-anchor="end" font-size="16">20</text>
<text x="1147.6" y="548" text-anchor="middle" font-size="16">0</text>
<text x="1284.98" y="548" text-anchor="middle" font-size="16">2</text>
<text x="1422.36" y="548" text-anchor="middle" font-size="16">4</text>
<text x="1559.74" y="548" text-anchor="middle" font-size="16">6</text>
<text x="1697.12" y="548" text-anchor="middle" font-size="16">8</text>
<text x="1834.5" y="548" text-anchor="middle" font-size="16">10</text>
<text x="1152.1" y="154.85" font-size="16">×10<tspan font-size="9.5" dy="-4.4">3</tspan></text>
<rect x="1842.5" y="512.61" width="35" height="18.89" fill="#273da8"/>
<rect x="1842.5" y="494.03" width="35" height="18.89" fill="#1751cb"/>
<rect x="1842.5" y="475.44" width="35" height="18.89" fill="#1063dc"/>
<rect x="1842.5" y="456.85" width="35" height="18.89" fill="#1271d9"/>
<rect x="1842.5" y="438.26" width="35" height="18.89" fill="#1480d6"/>
<rect x="1842.5" y="419.68" width="35" height="18.89" fill="#0e8ed1"/>
<rect x="1842.5" y="401.09" width="35" height="18.89" fill="#099dcc"/>
<rect x="1842.5" y="382.5" width="35" height="18.89" fill="#0da7c3"/>
<rect x="1842.5" y="363.91" width="35" height="18.89" fill="#1eafb3"/>
<rect x="1842.5" y="345.33" width="35" height="18.89" fill="#2eb7a4"/>
<rect x="1842.5" y="326.74" width="35" height="18.89" fill="#52ba91"/>
<rect x="1842.5" y="308.15" width="35" height="18.89" fill="#74bd80"/>
<rect x="1842.5" y="289.56" width="35" height="18.89" fill="#96be71"/>
<rect x="1842.5" y="270.98" width="35" height="18.89" fill="#b4bd65"/>
<rect x="1842.5" y="252.39" width="35" height="18.89" fill="#d1bb59"/>
<rect x="1842.5" y="233.8" width="35" height="18.89" fill="#e3c04a"/>
<rect x="1842.5" y="215.21" width="35" height="18.89" fill="#f5c63a"/>
<rect x="1842.5" y="196.62" width="35" height="18.89" fill="#fdd32a"/>
<rect x="1842.5" y="178.04" width="35" height="18.89" fill="#fbe81c"/>
<rect x="1842.5" y="159.45" width="35" height="18.89" fill="#f9fb0e"/>
<path d="M1877.5 159.45V531.2" stroke="#000" stroke-width="1" opacity="0.8"/>
<text x="1880.5" y="535.9" font-size="16">0</text>
<text x="1880.5" y="502.1" font-size="16">1</text>
<text x="1880.5" y="468.31" font-size="16">2</text>
<text x="1880.5" y="434.51" font-size="16">3</text>
<text x="1880.5" y="400.72" font-size="16">4</text>
<text x="1880.5" y="366.92" font-size="16">5</text>
<text x="1880.5" y="333.13" font-size="16">6</text>
<text x="1880.5" y="299.33" font-size="16">7</text>
<text x="1880.5" y="265.54" font-size="16">8</text>
<text x="1880.5" y="231.74" font-size="16">9</text>
<text x="1880.5" y="197.95" font-size="16">10</text>
<text x="1880.5" y="164.15" font-size="16">11</text>
<path d="M1877.5 531.2h-19M1877.5 497.4h-19M1877.5 463.61h-19M1877.5 429.81h-19M1877.5 396.02h-19M1877.5 362.22h-19M1877.5 328.43h-19M1877.5 294.63h-19M1877.5 260.84h-19M1877.5 227.04h-19M1877.5 193.25h-19M1877.5 159.45h-19" stroke="#000" stroke-width="1" opacity="0.85"/>
<rect x="1731.54" y="143.45" width="171" height="123" fill="#fff" stroke="#000" stroke-width="1" stroke-opacity="0.85"/>
<path d="M1731.54 163.95H1902.54" stroke="#000" stroke-width="1" stroke-opacity="0.85"/>
<text x="1817.04" y="156.85" text-anchor="middle" font-size="12.8">lowEnergyAngleEDSSD1</text>
<text x="1740.54" y="177.75" font-size="12.8">Entries</text>
<text x="1893.54" y="177.75" text-anchor="end" font-size="12.8">745</text>
<text x="1740.54" y="198.25" font-size="12.8">Mean x</text>
<text x="1893.54" y="198.25" text-anchor="end" font-size="12.8">4.929</text>
<text x="1740.54" y="218.75" font-size="12.8">Mean y</text>
<text x="1893.54" y="218.75" text-anchor="end" font-size="12.8">1330</text>
<text x="1740.54" y="239.25" font-size="12.8">Std Dev x</text>
<text x="1893.54" y="239.25" text-anchor="end" font-size="12.8">1.193</text>
<text x="1740.54" y="259.75" font-size="12.8">Std Dev y</text>
<text x="1893.54" y="259.75" text-anchor="end" font-size="12.8">2553</text>
<rect x="289.6" y="623.25" width="686.9" height="371.5" fill="#fff"/>
<path fill="#273da8" d="M605.57 663h13.74v1.25h-13.74zM619.31 698.25h13.74v1.25h-13.74zM440.72 758.25h13.74v1.5h-13.74zM468.19 759.5h13.74v1.25h-13.74zM509.41 862h13.74v0.75h-13.74zM578.1 764.75h13.74v2.75h-13.74zM578.1 771h13.74v2h-13.74zM578.1 775h13.74v2.75h-13.74zM578.1 834h13.74v0.75h-13.74zM591.84 763.5h13.74v3h-13.74zM591.84 850h13.74v0.75h-13.74zM605.57 763h13.74v4.25h-13.74zM605.57 771.5h13.74v2.25h-13.74zM605.57 776.75h13.74v1.25h-13.74zM605.57 866h13.74v0.75h-13.74zM619.31 770.25h13.74v2h-13.74zM619.31 775h13.74v1.5h-13.74zM646.79 760.75h13.74v1.75h-13.74zM646.79 776.5h13.74v1.5h-13.74zM660.53 756.25h13.74v2h-13.74zM660.53 760.5h13.74v1.25h-13.74zM660.53 846h13.74v1.75h-13.74zM674.26 756h13.74v5.5h-13.74zM688 759h13.74v2.75h-13.74zM688 851.75h13.74v1.5h-13.74zM701.74 866h13.74v0.75h-13.74zM440.72 977.75h13.74v1.25h-13.74zM454.46 983h13.74v2.5h-13.74zM468.19 980h13.74v2h-13.74zM468.19 983h13.74v2.5h-13.74zM481.93 980h13.74v5.5h-13.74zM495.67 979.25h13.74v0.75h-13.74zM495.67 981.5h13.74v4h-13.74zM509.41 979.25h13.74v4h-13.74zM523.15 978h13.74v1h-13.74zM523.15 981.75h13.74v3.75h-13.74zM536.88 978.25h13.74v7.25h-13.74zM550.62 971.25h13.74v1.25h-13.74zM550.62 979.5h13.74v6.25h-13.74zM564.36 978.25h13.74v7.25h-13.74zM578.1 904.5h13.74v1.5h-13.74zM578.1 936h13.74v1.5h-13.74zM578.1 978.25h13.74v3.75h-13.74zM591.84 950.75h13.74v1.5h-13.74zM591.84 968h13.74v1.75h-13.74zM591.84 975.75h13.74v1.25h-13.74zM591.84 978.5h13.74v3.5h-13.74zM605.57 972h13.74v3.5h-13.74zM605.57 979h13.74v3h-13.74zM619.31 967h13.74v6h-13.74zM619.31 976h13.74v6.25h-13.74zM619.31 984.75h13.74v1.75h-13.74zM633.05 968.25h13.74v1h-13.74zM633.05 975.75h13.74v6.25h-13.74zM646.79 968h13.74v1.25h-13.74zM646.79 972h13.74v1.5h-13.74zM646.79 974.75h13.74v6.75h-13.74zM646.79 984.5h13.74v2.25h-13.74zM660.53 966.5h13.74v1.5h-13.74zM660.53 969.5h13.74v1.5h-13.74zM660.53 974h13.74v5.75h-13.74zM660.53 984.75h13.74v1.75h-13.74zM674.26 960.25h13.74v1.5h-13.74zM674.26 967.5h13.74v1.75h-13.74zM674.26 976.25h13.74v5h-13.74zM688 967h13.74v11.25h-13.74zM688 985.75h13.74v1.5h-13.74zM701.74 944.75h13.74v1.5h-13.74zM701.74 967h13.74v8.75h-13.74zM701.74 985.75h13.74v1h-13.74zM715.48 949.75h13.74v2.25h-13.74zM715.48 967.75h13.74v3.75h-13.74zM715.48 974.25h13.74v1h-13.74zM715.48 977.5h13.74v1.5h-13.74zM715.48 985.25h13.74v1h-13.74zM729.22 975h13.74v3h-13.74zM729.22 980.5h13.74v1.5h-13.74zM729.22 985.5h13.74v1.25h-13.74zM742.95 944.75h13.74v1.25h-13.74zM742.95 977.25h13.74v2.25h-13.74zM742.95 985.5h13.74v1.25h-13.74zM756.69 943.25h13.74v1.25h-13.74zM756.69 948.75h13.74v1.25h-13.74zM756.69 967.75h13.74v1.25h-13.74zM756.69 975.5h13.74v1.25h-13.74zM770.43 967.75h13.74v2h-13.74zM770.43 971h13.74v2h-13.74zM770.43 974.5h13.74v1.75h-13.74zM784.17 972.5h13.74v14.25h-13.74zM797.91 974.25h13.74v1.5h-13.74zM797.91 978.5h13.74v3.25h-13.74zM797.91 983h13.74v1.5h-13.74zM811.64 978.25h13.74v1.5h-13.74zM811.64 984h13.74v1.5h-13.74z"/>
<path fill="#273da8" fill-opacity="0.52" d="M536.88 699.5h13.74v1h-13.74zM454.46 760.5h13.74v0.75h-13.74zM468.19 756.5h13.74v1h-13.74zM481.93 756.5h13.74v1h-13.74zM481.93 761h13.74v1.5h-13.74zM481.93 763h13.74v0.75h-13.74zM481.93 815.75h13.74v1h-13.74zM495.67 756.5h13.74v0.75h-13.74zM495.67 768.5h13.74v1h-13.74zM564.36 764.5h13.74v1h-13.74zM578.1 784.25h13.74v1.25h-13.74zM578.1 819.75h13.74v1h-13.74zM591.84 768.25h13.74v1h-13.74zM591.84 778.75h13.74v2.5h-13.74zM605.57 767.5h13.74v1.75h-13.74zM605.57 791.75h13.74v1h-13.74zM619.31 856.25h13.74v1.25h-13.74zM633.05 767.25h13.74v1.5h-13.74zM633.05 867.5h13.74v1.25h-13.74zM633.05 871.5h13.74v1.25h-13.74zM646.79 767.25h13.74v1.5h-13.74zM646.79 772h13.74v1.25h-13.74zM660.53 763.25h13.74v1.5h-13.74zM674.26 844h13.74v1.25h-13.74zM674.26 868h13.74v1.25h-13.74zM688 772.25h13.74v1.25h-13.74zM701.74 760h13.74v1.25h-13.74zM701.74 767.25h13.74v1.5h-13.74zM701.74 780.25h13.74v1.25h-13.74zM715.48 784.25h13.74v1.25h-13.74zM729.22 762.5h13.74v1.25h-13.74zM756.69 804.25h13.74v1.25h-13.74zM440.72 948.5h13.74v1.25h-13.74zM440.72 961.25h13.74v1h-13.74zM468.19 977.25h13.74v1.25h-13.74zM550.62 960.5h13.74v1.25h-13.74zM550.62 978.5h13.74v1h-13.74zM564.36 973.25h13.74v1h-13.74zM578.1 943.75h13.74v1.25h-13.74zM578.1 972.25h13.74v1.25h-13.74zM591.84 907.75h13.74v1h-13.74zM591.84 949.5h13.74v0.75h-13.74zM591.84 955.75h13.74v1h-13.74zM591.84 977.5h13.74v0.75h-13.74zM605.57 907.75h13.74v1h-13.74zM605.57 943.75h13.74v1.25h-13.74zM605.57 969.25h13.74v2h-13.74zM605.57 976h13.74v1.25h-13.74zM619.31 936.75h13.74v1.25h-13.74zM619.31 961.5h13.74v1h-13.74zM619.31 973.25h13.74v1h-13.74zM619.31 989.5h13.74v1h-13.74zM633.05 973.25h13.74v2h-13.74zM633.05 986h13.74v1h-13.74zM646.79 960.75h13.74v1.25h-13.74zM646.79 973.5h13.74v1.25h-13.74zM660.53 900.5h13.74v1h-13.74zM674.26 948.5h13.74v1.5h-13.74zM674.26 952.5h13.74v1.5h-13.74zM674.26 965.25h13.74v0.75h-13.74zM674.26 973.5h13.74v1.25h-13.74zM688 900.5h13.74v1h-13.74zM688 989.25h13.74v1h-13.74zM701.74 932.5h13.74v1.5h-13.74zM701.74 937.25h13.74v1h-13.74zM701.74 948.5h13.74v1h-13.74zM701.74 952.5h13.74v1.25h-13.74zM701.74 960.5h13.74v1.25h-13.74zM701.74 965.25h13.74v0.75h-13.74zM715.48 952.25h13.74v1.75h-13.74zM715.48 972h13.74v1.75h-13.74zM715.48 975.75h13.74v1.25h-13.74zM729.22 969h13.74v1h-13.74zM729.22 972.25h13.74v2.5h-13.74zM742.95 960.75h13.74v1.25h-13.74zM742.95 974.5h13.74v1.25h-13.74zM756.69 888.25h13.74v1.25h-13.74zM756.69 956h13.74v0.75h-13.74zM756.69 970.75h13.74v1.75h-13.74zM756.69 972.75h13.74v2.5h-13.74zM770.43 976.25h13.74v1.5h-13.74zM784.17 949.5h13.74v1h-13.74z"/>
<path fill="#273da8" fill-opacity="0.78" d="M536.88 763h13.74v2h-13.74zM688 697h13.74v0.75h-13.74zM454.46 757h13.74v0.75h-13.74zM468.19 762h13.74v0.75h-13.74zM495.67 761.25h13.74v0.75h-13.74zM550.62 773h13.74v0.75h-13.74zM578.1 855.12h13.74v0.75h-13.74zM591.84 771.25h13.74v1h-13.74zM591.84 786h13.74v0.75h-13.74zM591.84 790.75h13.74v1h-13.74zM605.57 790h13.74v1h-13.74zM605.57 817h13.74v1.75h-13.74zM619.31 778h13.74v1h-13.74zM619.31 873h13.74v0.75h-13.74zM646.79 802.75h13.74v2.5h-13.74zM646.79 853h13.74v0.75h-13.74zM660.53 770h13.74v0.75h-13.74zM660.53 830h13.74v0.75h-13.74zM660.53 855h13.74v0.75h-13.74zM674.26 765.25h13.74v1.5h-13.74zM688 757h13.74v1h-13.74zM688 778h13.74v0.75h-13.74zM715.48 761h13.74v0.75h-13.74zM742.95 810.75h13.74v1h-13.74zM742.95 837h13.74v0.75h-13.74zM495.67 959h13.74v0.75h-13.74zM509.41 983.25h13.74v2h-13.74zM550.62 977.5h13.74v1h-13.74zM550.62 986h13.74v0.75h-13.74zM564.36 970.25h13.74v0.75h-13.74zM578.1 947.25h13.74v0.75h-13.74zM578.1 962.25h13.74v3.25h-13.74zM578.1 967.25h13.74v0.75h-13.74zM578.1 970.25h13.74v1.75h-13.74zM578.1 987.25h13.74v0.75h-13.74zM591.84 954h13.74v1h-13.74zM605.57 923.25h13.74v0.75h-13.74zM605.57 938.25h13.74v0.75h-13.74zM605.57 958.25h13.74v0.75h-13.74zM619.31 943.25h13.74v0.75h-13.74zM619.31 955.25h13.74v0.75h-13.74zM619.31 974.5h13.74v1h-13.74zM633.05 970h13.74v0.75h-13.74zM633.05 988.25h13.74v0.75h-13.74zM646.79 946.25h13.74v0.75h-13.74zM660.53 895.25h13.74v0.75h-13.74zM660.53 958.25h13.74v0.75h-13.74zM660.53 993.25h13.74v0.75h-13.74zM674.26 910.5h13.74v1.75h-13.74zM674.26 913.25h13.74v1h-13.74zM674.26 969.5h13.74v1.5h-13.74zM674.26 972h13.74v1.25h-13.74zM674.26 975h13.74v1h-13.74zM688 895.25h13.74v0.75h-13.74zM701.74 889h13.74v1h-13.74zM701.74 891h13.74v0.75h-13.74zM701.74 942.25h13.74v0.75h-13.74zM701.74 947h13.74v1.25h-13.74zM701.74 976h13.74v1.75h-13.74zM715.48 993.25h13.74v0.75h-13.74zM729.22 942.25h13.74v0.75h-13.74zM729.22 947.25h13.74v0.75h-13.74zM729.22 971h13.74v1.25h-13.74zM742.95 879.25h13.74v0.75h-13.74zM742.95 948.5h13.74v1.75h-13.74zM742.95 958.25h13.74v0.75h-13.74zM742.95 971.25h13.74v3h-13.74zM756.69 938.25h13.74v0.75h-13.74zM756.69 946.25h13.74v0.75h-13.74zM756.69 954.25h13.74v1h-13.74zM756.69 969.25h13.74v1h-13.74zM756.69 977h13.74v1.75h-13.74zM770.43 890.25h13.74v0.75h-13.74zM770.43 938.25h13.74v0.75h-13.74zM770.43 942.25h13.74v0.75h-13.74zM770.43 950.25h13.74v0.75h-13.74zM770.43 959.25h13.74v0.75h-13.74zM784.17 955.25h13.74v0.75h-13.74z"/>
<path fill="#1063dc" d="M578.1 758.25h13.74v2h-13.74zM578.1 763.25h13.74v1.25h-13.74zM633.05 761h13.74v1.25h-13.74zM578.1 982.25h13.74v2.5h-13.74zM591.84 982.25h13.74v2.5h-13.74zM619.31 982.25h13.74v2.5h-13.74zM633.05 982.25h13.74v1.75h-13.74zM646.79 981.5h13.74v3h-13.74zM660.53 979.75h13.74v3h-13.74zM674.26 981.5h13.74v1.75h-13.74zM674.26 985.25h13.74v1h-13.74zM688 978.25h13.74v3.5h-13.74zM701.74 977.75h13.74v3.25h-13.74zM701.74 981.25h13.74v2h-13.74zM715.48 981.25h13.74v1.25h-13.74zM715.48 982.5h13.74v2.75h-13.74zM729.22 978.25h13.74v2h-13.74zM742.95 979.75h13.74v2h-13.74zM770.43 978h13.74v3.25h-13.74zM770.43 983h13.74v2.5h-13.74z"/>
<path fill="#0da7c3" d="M578.1 760.25h13.74v3h-13.74zM633.05 758.5h13.74v2.5h-13.74z"/>
<path fill="#1751cb" d="M591.84 757.25h13.74v1.25h-13.74zM605.57 757.25h13.74v1.25h-13.74zM619.31 762h13.74v1.5h-13.74zM660.53 758.5h13.74v1.75h-13.74zM578.1 907h13.74v2h-13.74zM605.57 982.5h13.74v3.75h-13.74zM633.05 984h13.74v1.25h-13.74zM715.48 979.25h13.74v2h-13.74zM756.69 979h13.74v2h-13.74zM770.43 981.5h13.74v1.25h-13.74z"/>
<path fill="#52ba91" d="M591.84 758.5h13.74v1.5h-13.74z"/>
<path fill="#f9fb0e" d="M591.84 760h13.74v1.75h-13.74z"/>
<path fill="#1271d9" d="M591.84 761.75h13.74v1.25h-13.74zM605.57 761.75h13.74v1h-13.74zM619.31 757.5h13.74v1.25h-13.74zM633.05 757.5h13.74v1.25h-13.74zM646.79 757.5h13.74v3h-13.74zM660.53 983h13.74v1.75h-13.74zM729.22 982.25h13.74v3.25h-13.74zM742.95 982h13.74v3.5h-13.74zM756.69 981.25h13.74v4.25h-13.74z"/>
<path fill="#96be71" d="M605.57 758.5h13.74v1.25h-13.74z"/>
<path fill="#e3c04a" d="M605.57 759.75h13.74v2h-13.74zM619.31 758.75h13.74v2h-13.74z"/>
<path fill="#1063dc" fill-opacity="0.5" d="M619.31 756.25h13.74v1.25h-13.74zM633.05 756.25h13.74v1.25h-13.74zM646.79 756.25h13.74v1.25h-13.74z"/>
<path fill="#099dcc" d="M619.31 760.75h13.74v1h-13.74z"/>
<path fill="#ffffff" fill-opacity="0.7" d="M550.62 984.5h13.74v1h-13.74z"/>
<path fill="#1480d6" d="M674.26 983h13.74v2.25h-13.74zM688 981.75h13.74v3.75h-13.74zM701.74 983.25h13.74v2.25h-13.74z"/>
<rect x="289.6" y="623.25" width="686.9" height="371.5" fill="none" stroke="#000" stroke-width="1"/>
<path d="M289.6 994.75h25.7M289.6 985.46h12.9M289.6 976.17h12.9M289.6 966.89h12.9M289.6 957.6h25.7M289.6 948.31h12.9M289.6 939.02h12.9M289.6 929.74h12.9M289.6 920.45h25.7M289.6 911.16h12.9M289.6 901.88h12.9M289.6 892.59h12.9M289.6 883.3h25.7M289.6 874.01h12.9M289.6 864.73h12.9M289.6 855.44h12.9M289.6 846.15h25.7M289.6 836.86h12.9M289.6 827.58h12.9M289.6 818.29h12.9M289.6 809h25.7M289.6 799.71h12.9M289.6 790.42h12.9M289.6 781.14h12.9M289.6 771.85h25.7M289.6 762.56h12.9M289.6 753.27h12.9M289.6 743.99h12.9M289.6 734.7h25.7M289.6 725.41h12.9M289.6 716.12h12.9M289.6 706.84h12.9M289.6 697.55h25.7M289.6 688.26h12.9M289.6 678.98h12.9M289.6 669.69h12.9M289.6 660.4h25.7M289.6 651.11h12.9M289.6 641.83h12.9M289.6 632.54h12.9M289.6 623.25h25.7M289.6 994.75v-13.9M323.95 994.75v-7M358.29 994.75v-7M392.63 994.75v-7M426.98 994.75v-13.9M461.33 994.75v-7M495.67 994.75v-7M530.01 994.75v-7M564.36 994.75v-13.9M598.71 994.75v-7M633.05 994.75v-7M667.39 994.75v-7M701.74 994.75v-13.9M736.09 994.75v-7M770.43 994.75v-7M804.77 994.75v-7M839.12 994.75v-13.9M873.47 994.75v-7M907.81 994.75v-7M942.15 994.75v-7M976.5 994.75v-13.9" stroke="#000" stroke-width="1" fill="none" opacity="0.85"/>
<text x="287.2" y="999.05" text-anchor="end" font-size="16">0</text>
<text x="287.2" y="961.9" text-anchor="end" font-size="16">2</text>
<text x="287.2" y="924.75" text-anchor="end" font-size="16">4</text>
<text x="287.2" y="887.6" text-anchor="end" font-size="16">6</text>
<text x="287.2" y="850.45" text-anchor="end" font-size="16">8</text>
<text x="287.2" y="813.3" text-anchor="end" font-size="16">10</text>
<text x="287.2" y="776.15" text-anchor="end" font-size="16">12</text>
<text x="287.2" y="739" text-anchor="end" font-size="16">14</text>
<text x="287.2" y="701.85" text-anchor="end" font-size="16">16</text>
<text x="287.2" y="664.7" text-anchor="end" font-size="16">18</text>
<text x="287.2" y="628.25" text-anchor="end" font-size="16">20</text>
<text x="289.6" y="1011.55" text-anchor="middle" font-size="16">0</text>
<text x="426.98" y="1011.55" text-anchor="middle" font-size="16">2</text>
<text x="564.36" y="1011.55" text-anchor="middle" font-size="16">4</text>
<text x="701.74" y="1011.55" text-anchor="middle" font-size="16">6</text>
<text x="839.12" y="1011.55" text-anchor="middle" font-size="16">8</text>
<text x="976.5" y="1011.55" text-anchor="middle" font-size="16">10</text>
<text x="294.1" y="618.65" font-size="16">×10<tspan font-size="9.5" dy="-4.4">3</tspan></text>
<rect x="984.5" y="976.17" width="35" height="18.88" fill="#273da8"/>
<rect x="984.5" y="957.6" width="35" height="18.87" fill="#1751cb"/>
<rect x="984.5" y="939.02" width="35" height="18.88" fill="#1063dc"/>
<rect x="984.5" y="920.45" width="35" height="18.87" fill="#1271d9"/>
<rect x="984.5" y="901.88" width="35" height="18.88" fill="#1480d6"/>
<rect x="984.5" y="883.3" width="35" height="18.88" fill="#0e8ed1"/>
<rect x="984.5" y="864.73" width="35" height="18.87" fill="#099dcc"/>
<rect x="984.5" y="846.15" width="35" height="18.88" fill="#0da7c3"/>
<rect x="984.5" y="827.58" width="35" height="18.87" fill="#1eafb3"/>
<rect x="984.5" y="809" width="35" height="18.88" fill="#2eb7a4"/>
<rect x="984.5" y="790.42" width="35" height="18.88" fill="#52ba91"/>
<rect x="984.5" y="771.85" width="35" height="18.87" fill="#74bd80"/>
<rect x="984.5" y="753.27" width="35" height="18.88" fill="#96be71"/>
<rect x="984.5" y="734.7" width="35" height="18.87" fill="#b4bd65"/>
<rect x="984.5" y="716.12" width="35" height="18.88" fill="#d1bb59"/>
<rect x="984.5" y="697.55" width="35" height="18.88" fill="#e3c04a"/>
<rect x="984.5" y="678.98" width="35" height="18.87" fill="#f5c63a"/>
<rect x="984.5" y="660.4" width="35" height="18.88" fill="#fdd32a"/>
<rect x="984.5" y="641.83" width="35" height="18.87" fill="#fbe81c"/>
<rect x="984.5" y="623.25" width="35" height="18.88" fill="#f9fb0e"/>
<path d="M1019.5 623.25V994.75" stroke="#000" stroke-width="1" opacity="0.8"/>
<text x="1022.5" y="999.45" font-size="16">0</text>
<text x="1022.5" y="970.52" font-size="16">10</text>
<text x="1022.5" y="941.58" font-size="16">20</text>
<text x="1022.5" y="912.65" font-size="16">30</text>
<text x="1022.5" y="883.72" font-size="16">40</text>
<text x="1022.5" y="854.78" font-size="16">50</text>
<text x="1022.5" y="825.85" font-size="16">60</text>
<text x="1022.5" y="796.92" font-size="16">70</text>
<text x="1022.5" y="767.99" font-size="16">80</text>
<text x="1022.5" y="739.05" font-size="16">90</text>
<text x="1022.5" y="710.12" font-size="16">100</text>
<text x="1022.5" y="681.19" font-size="16">110</text>
<text x="1022.5" y="652.25" font-size="16">120</text>
<path d="M1019.5 994.75h-19M1019.5 965.82h-19M1019.5 936.88h-19M1019.5 907.95h-19M1019.5 879.02h-19M1019.5 850.08h-19M1019.5 821.15h-19M1019.5 792.22h-19M1019.5 763.29h-19M1019.5 734.35h-19M1019.5 705.42h-19M1019.5 676.49h-19M1019.5 647.55h-19" stroke="#000" stroke-width="1" opacity="0.85"/>
<rect x="873.54" y="607.25" width="171" height="123" fill="#fff" stroke="#000" stroke-width="1" stroke-opacity="0.85"/>
<path d="M873.54 627.75H1044.54" stroke="#000" stroke-width="1" stroke-opacity="0.85"/>
<text x="959.04" y="620.65" text-anchor="middle" font-size="12.8">lowEnergyAngleEDSSD2</text>
<text x="882.54" y="641.55" font-size="12.8">Entries</text>
<text x="1035.54" y="641.55" text-anchor="end" font-size="12.8">3321</text>
<text x="882.54" y="662.05" font-size="12.8">Mean x</text>
<text x="1035.54" y="662.05" text-anchor="end" font-size="12.8">5.269</text>
<text x="882.54" y="682.55" font-size="12.8">Mean y</text>
<text x="1035.54" y="682.55" text-anchor="end" font-size="12.8">6191</text>
<text x="882.54" y="703.05" font-size="12.8">Std Dev x</text>
<text x="1035.54" y="703.05" text-anchor="end" font-size="12.8">0.9590</text>
<text x="882.54" y="723.55" font-size="12.8">Std Dev y</text>
<text x="1035.54" y="723.55" text-anchor="end" font-size="12.8">5864</text>
<rect x="1147.6" y="623.25" width="686.9" height="371.5" fill="#fff"/>
<path fill="#1751cb" d="M1408.62 649.5h13.74v2h-13.74zM1422.36 710.5h13.74v1.75h-13.74zM1298.72 982.25h13.74v2.75h-13.74zM1339.93 977.25h13.74v2.5h-13.74zM1339.93 982h13.74v1.75h-13.74zM1353.67 979.5h13.74v2h-13.74zM1367.41 966.5h13.74v1.5h-13.74zM1367.41 978.25h13.74v3.25h-13.74zM1381.15 965.75h13.74v1.25h-13.74zM1381.15 977h13.74v1.5h-13.74zM1381.15 979h13.74v3h-13.74zM1394.88 969.5h13.74v1.25h-13.74zM1408.62 966h13.74v1.75h-13.74zM1408.62 978.5h13.74v2.5h-13.74zM1422.36 966.5h13.74v1.25h-13.74zM1422.36 977.5h13.74v1.75h-13.74zM1436.1 970h13.74v1.75h-13.74zM1436.1 977.75h13.74v2h-13.74zM1449.84 964.5h13.74v2.75h-13.74zM1449.84 969.25h13.74v5h-13.74zM1449.84 976h13.74v2h-13.74zM1449.84 987.5h13.74v2h-13.74zM1463.57 968h13.74v1.75h-13.74zM1463.57 977.5h13.74v2h-13.74zM1477.31 963.75h13.74v1.75h-13.74zM1477.31 977.5h13.74v1.75h-13.74zM1491.05 970.75h13.74v1h-13.74zM1491.05 977.5h13.74v1.75h-13.74zM1504.79 967h13.74v2.75h-13.74zM1504.79 977.5h13.74v1.5h-13.74zM1504.79 979.25h13.74v1.5h-13.74zM1518.53 968h13.74v1.5h-13.74zM1518.53 977.5h13.74v1.5h-13.74zM1532.26 979h13.74v2.25h-13.74zM1546 966.5h13.74v1.25h-13.74zM1546 980h13.74v1.75h-13.74zM1546 984.75h13.74v2h-13.74zM1573.48 978.25h13.74v1.75h-13.74zM1600.95 982.25h13.74v1.75h-13.74zM1600.95 984h13.74v1.5h-13.74zM1614.69 983h13.74v0.62h-13.74z"/>
<path fill="#273da8" fill-opacity="0.78" d="M1408.62 716.25h13.74v0.75h-13.74zM1477.31 822h13.74v0.75h-13.74zM1477.31 826.25h13.74v0.75h-13.74zM1477.31 855.25h13.74v0.75h-13.74zM1394.88 811h13.74v0.75h-13.74zM1394.88 814.25h13.74v0.75h-13.74zM1504.79 710.25h13.74v0.75h-13.74zM1463.57 733.25h13.74v0.75h-13.74zM1463.57 883.25h13.74v0.75h-13.74zM1573.48 793h13.74v0.75h-13.74zM1367.41 798.25h13.74v0.75h-13.74zM1381.15 803h27.48v1h-27.48zM1381.15 851.25h27.48v0.75h-27.48zM1449.84 851.25h13.74v0.75h-13.74zM1298.72 958h13.74v0.75h-13.74zM1298.72 978.25h13.74v1.25h-13.74zM1312.46 979h13.74v0.75h-13.74zM1326.19 978.25h13.74v1h-13.74zM1339.93 975.5h13.74v1.5h-13.74zM1408.62 938.25h13.74v0.75h-13.74zM1408.62 962.25h13.74v1.5h-13.74zM1408.62 972.25h13.74v1.25h-13.74zM1408.62 987h13.74v0.75h-13.74zM1422.36 918.25h13.74v0.75h-13.74zM1422.36 950.25h13.74v0.75h-13.74zM1422.36 955.25h13.74v0.75h-13.74zM1436.1 903.25h13.74v0.75h-13.74zM1463.57 883.25h13.74v0.75h-13.74zM1463.57 895.25h13.74v0.75h-13.74zM1477.31 965.75h13.74v1.75h-13.74zM1504.79 902.25h13.74v0.75h-13.74zM1504.79 906.25h13.74v0.75h-13.74zM1504.79 926.25h13.74v0.75h-13.74zM1504.79 959.25h13.74v0.75h-13.74zM1518.53 959.25h13.74v0.75h-13.74zM1518.53 962.25h13.74v1.75h-13.74zM1532.26 917.25h13.74v1h-13.74zM1532.26 964.5h13.74v2.5h-13.74zM1532.26 971h13.74v0.75h-13.74zM1532.26 987h13.74v0.75h-13.74zM1573.48 975.75h13.74v1h-13.74zM1614.69 979.25h13.74v0.62h-13.74zM1628.43 983h13.74v0.62h-13.74z"/>
<path fill="#273da8" fill-opacity="0.52" d="M1436.1 651.25h13.74v1h-13.74zM1477.31 779h13.74v1h-13.74zM1463.57 735.25h13.74v0.75h-13.74zM1559.74 792.5h13.74v1h-13.74zM1559.74 844h13.74v1h-13.74zM1518.53 848.5h13.74v1h-13.74zM1284.98 984.5h13.74v1h-13.74zM1339.93 971.75h13.74v1h-13.74zM1367.41 932.5h13.74v1.5h-13.74zM1381.15 972.25h13.74v1.75h-13.74zM1394.88 959.25h13.74v2.25h-13.74zM1394.88 973h13.74v1.25h-13.74zM1394.88 988.75h13.74v1.5h-13.74zM1422.36 961.25h13.74v1.25h-13.74zM1436.1 935.75h13.74v2.75h-13.74zM1436.1 965.5h13.74v1h-13.74zM1449.84 949.5h13.74v1.25h-13.74zM1463.57 959.75h13.74v1.25h-13.74zM1477.31 969h13.74v1h-13.74zM1477.31 973.25h13.74v1.25h-13.74zM1491.05 972h13.74v1h-13.74zM1504.79 965.75h13.74v1h-13.74zM1518.53 937.25h13.74v1.25h-13.74zM1518.53 964.5h13.74v1.5h-13.74zM1518.53 972.25h13.74v1.75h-13.74zM1532.26 969.25h13.74v1h-13.74zM1532.26 973.25h13.74v1h-13.74zM1546 972.25h13.74v1.5h-13.74zM1573.48 953.25h13.74v1.25h-13.74zM1573.48 964.25h13.74v1.75h-13.74zM1600.95 941.25h13.74v1.25h-13.74z"/>
<path fill="#273da8" d="M1477.31 651.75h13.74v1.25h-13.74zM1422.36 665.25h13.74v0.75h-13.74zM1394.88 703h13.74v1.25h-13.74zM1532.26 789h13.74v1.5h-13.74zM1284.98 979.75h13.74v1.5h-13.74zM1339.93 985.5h13.74v1.5h-13.74zM1381.15 951h13.74v1.25h-13.74zM1381.15 970.5h13.74v1.5h-13.74zM1394.88 964.5h13.74v1.5h-13.74zM1422.36 972h13.74v1.25h-13.74zM1436.1 980h13.74v2.25h-13.74zM1436.1 985.5h13.74v1.25h-13.74zM1449.84 967.25h13.74v2h-13.74zM1449.84 978.25h13.74v2h-13.74zM1449.84 986h13.74v1.25h-13.74zM1449.84 991.25h13.74v1.25h-13.74zM1463.57 928.25h13.74v1.5h-13.74zM1463.57 962.5h13.74v1.5h-13.74zM1463.57 972.75h13.74v1.25h-13.74zM1463.57 985.25h13.74v1.5h-13.74zM1477.31 994.25h13.74v0.62h-13.74zM1491.05 988.75h13.74v1.25h-13.74zM1504.79 970.25h13.74v1.25h-13.74zM1518.53 971h13.74v1h-13.74zM1559.74 979h13.74v3h-13.74zM1587.22 979h13.74v2h-13.74zM1600.95 975.75h13.74v1.75h-13.74z"/>
<path fill="#1063dc" fill-opacity="0.5" d="M1504.79 783.75h13.74v1.5h-13.74zM1353.67 981.75h13.74v2h-13.74zM1463.57 965h13.74v2.5h-13.74zM1491.05 965.75h13.74v1h-13.74zM1546 965h13.74v1h-13.74z"/>
<path fill="#1063dc" d="M1312.46 981.75h13.74v3.25h-13.74zM1326.19 981.75h13.74v1.75h-13.74zM1339.93 979.75h13.74v2h-13.74zM1339.93 983.75h13.74v1.75h-13.74zM1394.88 977h13.74v2h-13.74zM1394.88 979.25h13.74v3h-13.74zM1394.88 987h13.74v1.5h-13.74zM1408.62 981h13.74v1.5h-13.74zM1422.36 979.25h13.74v2.25h-13.74zM1436.1 967.25h13.74v2h-13.74zM1449.84 980.25h13.74v1.75h-13.74zM1463.57 970h13.74v1h-13.74zM1463.57 979.75h13.74v1.75h-13.74zM1491.05 966.75h13.74v3.75h-13.74zM1491.05 985.5h13.74v1.25h-13.74zM1573.48 980h13.74v1h-13.74zM1587.22 981.25h13.74v4.25h-13.74z"/>
<path fill="#1271d9" d="M1326.19 983.5h13.74v1.25h-13.74zM1353.67 983.75h13.74v1.5h-13.74zM1477.31 979.5h13.74v2.25h-13.74zM1491.05 979.5h13.74v2.25h-13.74zM1504.79 980.75h13.74v1.75h-13.74zM1504.79 984.5h13.74v1.25h-13.74zM1518.53 966.5h13.74v1.25h-13.74zM1518.53 984h13.74v1.5h-13.74zM1532.26 981.25h13.74v1.75h-13.74zM1546 963.75h13.74v1.25h-13.74zM1546 981.75h13.74v3h-13.74zM1559.74 982.25h13.74v3.25h-13.74zM1573.48 981.25h13.74v4.25h-13.74z"/>
<path fill="#1271d9" fill-opacity="0.5" d="M1367.41 969h13.74v1h-13.74zM1394.88 966.5h13.74v1h-13.74z"/>
<path fill="#1480d6" d="M1367.41 981.75h13.74v2h-13.74zM1381.15 982.25h13.74v3.5h-13.74zM1422.36 981.75h13.74v1.75h-13.74zM1436.1 982.5h13.74v1.5h-13.74zM1449.84 982.25h13.74v1.75h-13.74zM1463.57 981.75h13.74v1.75h-13.74zM1518.53 979.25h13.74v1.75h-13.74zM1532.26 983h13.74v1.75h-13.74z"/>
<path fill="#0e8ed1" d="M1367.41 983.75h13.74v1.75h-13.74zM1394.88 984.25h13.74v2.5h-13.74z"/>
<path fill="#52ba91" d="M1394.88 982.5h13.74v1.75h-13.74z"/>
<path fill="#74bd80" d="M1408.62 982.75h13.74v2.25h-13.74z"/>
<path fill="#099dcc" d="M1422.36 983.5h13.74v1.75h-13.74zM1449.84 984h13.74v2h-13.74zM1477.31 982h13.74v1.25h-13.74zM1518.53 981h13.74v2h-13.74z"/>
<path fill="#96be71" d="M1436.1 984h13.74v1.25h-13.74z"/>
<path fill="#0da7c3" d="M1463.57 983.5h13.74v1.5h-13.74z"/>
<path fill="#2eb7a4" d="M1477.31 983.25h13.74v1.75h-13.74zM1491.05 982h13.74v1.25h-13.74zM1504.79 982.5h13.74v0.75h-13.74z"/>
<path fill="#fbe81c" d="M1491.05 983.25h13.74v1.75h-13.74z"/>
<path fill="#f5c63a" d="M1504.79 983h13.74v1h-13.74z"/>
<path fill="#e3c04a" d="M1518.53 983h13.74v0.75h-13.74z"/>
<rect x="1147.6" y="623.25" width="686.9" height="371.5" fill="none" stroke="#000" stroke-width="1"/>
<path d="M1147.6 994.75h25.7M1147.6 985.46h12.9M1147.6 976.17h12.9M1147.6 966.89h12.9M1147.6 957.6h25.7M1147.6 948.31h12.9M1147.6 939.02h12.9M1147.6 929.74h12.9M1147.6 920.45h25.7M1147.6 911.16h12.9M1147.6 901.88h12.9M1147.6 892.59h12.9M1147.6 883.3h25.7M1147.6 874.01h12.9M1147.6 864.73h12.9M1147.6 855.44h12.9M1147.6 846.15h25.7M1147.6 836.86h12.9M1147.6 827.58h12.9M1147.6 818.29h12.9M1147.6 809h25.7M1147.6 799.71h12.9M1147.6 790.42h12.9M1147.6 781.14h12.9M1147.6 771.85h25.7M1147.6 762.56h12.9M1147.6 753.27h12.9M1147.6 743.99h12.9M1147.6 734.7h25.7M1147.6 725.41h12.9M1147.6 716.12h12.9M1147.6 706.84h12.9M1147.6 697.55h25.7M1147.6 688.26h12.9M1147.6 678.98h12.9M1147.6 669.69h12.9M1147.6 660.4h25.7M1147.6 651.11h12.9M1147.6 641.83h12.9M1147.6 632.54h12.9M1147.6 623.25h25.7M1147.6 994.75v-13.9M1181.94 994.75v-7M1216.29 994.75v-7M1250.63 994.75v-7M1284.98 994.75v-13.9M1319.32 994.75v-7M1353.67 994.75v-7M1388.01 994.75v-7M1422.36 994.75v-13.9M1456.7 994.75v-7M1491.05 994.75v-7M1525.39 994.75v-7M1559.74 994.75v-13.9M1594.09 994.75v-7M1628.43 994.75v-7M1662.78 994.75v-7M1697.12 994.75v-13.9M1731.46 994.75v-7M1765.81 994.75v-7M1800.15 994.75v-7M1834.5 994.75v-13.9" stroke="#000" stroke-width="1" fill="none" opacity="0.85"/>
<text x="1145.2" y="999.05" text-anchor="end" font-size="16">0</text>
<text x="1145.2" y="961.9" text-anchor="end" font-size="16">2</text>
<text x="1145.2" y="924.75" text-anchor="end" font-size="16">4</text>
<text x="1145.2" y="887.6" text-anchor="end" font-size="16">6</text>
<text x="1145.2" y="850.45" text-anchor="end" font-size="16">8</text>
<text x="1145.2" y="813.3" text-anchor="end" font-size="16">10</text>
<text x="1145.2" y="776.15" text-anchor="end" font-size="16">12</text>
<text x="1145.2" y="739" text-anchor="end" font-size="16">14</text>
<text x="1145.2" y="701.85" text-anchor="end" font-size="16">16</text>
<text x="1145.2" y="664.7" text-anchor="end" font-size="16">18</text>
<text x="1145.2" y="628.25" text-anchor="end" font-size="16">20</text>
<text x="1147.6" y="1011.55" text-anchor="middle" font-size="16">0</text>
<text x="1284.98" y="1011.55" text-anchor="middle" font-size="16">2</text>
<text x="1422.36" y="1011.55" text-anchor="middle" font-size="16">4</text>
<text x="1559.74" y="1011.55" text-anchor="middle" font-size="16">6</text>
<text x="1697.12" y="1011.55" text-anchor="middle" font-size="16">8</text>
<text x="1834.5" y="1011.55" text-anchor="middle" font-size="16">10</text>
<text x="1152.1" y="618.65" font-size="16">×10<tspan font-size="9.5" dy="-4.4">3</tspan></text>
<rect x="1842.5" y="976.17" width="35" height="18.88" fill="#273da8"/>
<rect x="1842.5" y="957.6" width="35" height="18.87" fill="#1751cb"/>
<rect x="1842.5" y="939.02" width="35" height="18.88" fill="#1063dc"/>
<rect x="1842.5" y="920.45" width="35" height="18.87" fill="#1271d9"/>
<rect x="1842.5" y="901.88" width="35" height="18.88" fill="#1480d6"/>
<rect x="1842.5" y="883.3" width="35" height="18.88" fill="#0e8ed1"/>
<rect x="1842.5" y="864.73" width="35" height="18.87" fill="#099dcc"/>
<rect x="1842.5" y="846.15" width="35" height="18.88" fill="#0da7c3"/>
<rect x="1842.5" y="827.58" width="35" height="18.87" fill="#1eafb3"/>
<rect x="1842.5" y="809" width="35" height="18.88" fill="#2eb7a4"/>
<rect x="1842.5" y="790.42" width="35" height="18.88" fill="#52ba91"/>
<rect x="1842.5" y="771.85" width="35" height="18.87" fill="#74bd80"/>
<rect x="1842.5" y="753.27" width="35" height="18.88" fill="#96be71"/>
<rect x="1842.5" y="734.7" width="35" height="18.87" fill="#b4bd65"/>
<rect x="1842.5" y="716.12" width="35" height="18.88" fill="#d1bb59"/>
<rect x="1842.5" y="697.55" width="35" height="18.88" fill="#e3c04a"/>
<rect x="1842.5" y="678.98" width="35" height="18.87" fill="#f5c63a"/>
<rect x="1842.5" y="660.4" width="35" height="18.88" fill="#fdd32a"/>
<rect x="1842.5" y="641.83" width="35" height="18.87" fill="#fbe81c"/>
<rect x="1842.5" y="623.25" width="35" height="18.88" fill="#f9fb0e"/>
<path d="M1877.5 623.25V994.75" stroke="#000" stroke-width="1" opacity="0.8"/>
<text x="1880.5" y="999.45" font-size="16">0</text>
<text x="1880.5" y="968.49" font-size="16">2</text>
<text x="1880.5" y="937.53" font-size="16">4</text>
<text x="1880.5" y="906.58" font-size="16">6</text>
<text x="1880.5" y="875.62" font-size="16">8</text>
<text x="1880.5" y="844.66" font-size="16">10</text>
<text x="1880.5" y="813.7" font-size="16">12</text>
<text x="1880.5" y="782.74" font-size="16">14</text>
<text x="1880.5" y="751.78" font-size="16">16</text>
<text x="1880.5" y="720.83" font-size="16">18</text>
<text x="1880.5" y="689.87" font-size="16">20</text>
<text x="1880.5" y="658.91" font-size="16">22</text>
<text x="1880.5" y="627.95" font-size="16">24</text>
<path d="M1877.5 994.75h-19M1877.5 963.79h-19M1877.5 932.83h-19M1877.5 901.88h-19M1877.5 870.92h-19M1877.5 839.96h-19M1877.5 809h-19M1877.5 778.04h-19M1877.5 747.08h-19M1877.5 716.12h-19M1877.5 685.17h-19M1877.5 654.21h-19M1877.5 623.25h-19" stroke="#000" stroke-width="1" opacity="0.85"/>
<rect x="1731.54" y="607.25" width="171" height="123" fill="#fff" stroke="#000" stroke-width="1" stroke-opacity="0.85"/>
<path d="M1731.54 627.75H1902.54" stroke="#000" stroke-width="1" stroke-opacity="0.85"/>
<text x="1817.04" y="620.65" text-anchor="middle" font-size="12.8">lowEnergyAngleEDSSD3</text>
<text x="1740.54" y="641.55" font-size="12.8">Entries</text>
<text x="1893.54" y="641.55" text-anchor="end" font-size="12.8">1092</text>
<text x="1740.54" y="662.05" font-size="12.8">Mean x</text>
<text x="1893.54" y="662.05" text-anchor="end" font-size="12.8">4.634</text>
<text x="1740.54" y="682.55" font-size="12.8">Mean y</text>
<text x="1893.54" y="682.55" text-anchor="end" font-size="12.8">1234</text>
<text x="1740.54" y="703.05" font-size="12.8">Std Dev x</text>
<text x="1893.54" y="703.05" text-anchor="end" font-size="12.8">0.9770</text>
<text x="1740.54" y="723.55" font-size="12.8">Std Dev y</text>
<text x="1893.54" y="723.55" text-anchor="end" font-size="12.8">2347</text>
<rect x="207" y="563.5" width="9" height="8.500" fill="#b0c4de"/>
<rect x="1065.5" y="563.5" width="9" height="8.500" fill="#b0c4de"/>
<rect x="207" y="1027.5" width="9" height="8.500" fill="#b0c4de"/>
<rect x="1065.5" y="1027.5" width="9" height="8.500" fill="#b0c4de"/>
</svg>
<div id="taskbar"><svg width="1920" height="37" viewBox="0 1043 1920 37" style="position:absolute;left:0;top:0;font-family:'Liberation Sans',sans-serif">
<rect x="5.5" y="1048.5" width="29" height="26" rx="3" fill="#efefef" stroke="#c4c4c4" stroke-width="1"/>
<path d="M17.400 1062 h-3.400 v6.400 h6.400 v-3.400" fill="none" stroke="#2e3436" stroke-width="2"/><rect x="20" y="1055.600" width="6" height="6" fill="#f6f6f6" stroke="#2e3436" stroke-width="2"/>
<rect x="39.5" y="1046.5" width="262" height="29.5" rx="3" fill="#efefef" stroke="#c8c8c8" stroke-width="1"/>
<rect x="47.6" y="1051.800" width="20.600" height="19" rx="1" fill="#d0d0ce" stroke="#b5b5b3" stroke-width="0.8"/><rect x="49.4" y="1053.800" width="17" height="15" fill="#9a9c9a"/><path d="M50.800000000000004 1056.400 l1.800 1.2 l-1.800 1.2" fill="none" stroke="#e8e8e8" stroke-width="0.7"/><rect x="53.6" y="1060.500" width="2.400" height="0.8" fill="#e8e8e8"/>
<text x="74" y="1067.2" font-size="14.6" fill="#a5a7a6" textLength="210" lengthAdjust="spacingAndGlyphs" font-weight="normal" >[pi@nnrpi1: ~/Programs/caenlogger]</text>
<rect x="307.5" y="1046.5" width="262" height="29.5" rx="3" fill="#efefef" stroke="#c4c4c4" stroke-width="1"/>
<rect x="315.6" y="1051.800" width="20.600" height="19" rx="1" fill="#c9c9c7" stroke="#8f8f8d" stroke-width="0.8"/><rect x="317.40000000000003" y="1053.800" width="17" height="15" fill="#2c302e"/><path d="M318.8 1056.400 l1.800 1.2 l-1.800 1.200" fill="none" stroke="#e0e4e0" stroke-width="0.7"/><rect x="321.6" y="1060.500" width="2.400" height="0.8" fill="#e0e4e0"/>
<text x="342" y="1067.2" font-size="14.6" fill="#2e3436" textLength="218" lengthAdjust="spacingAndGlyphs" font-weight="normal" >npg@carme-gsi:~/Programs/caenlog...</text>
<rect x="575.5" y="1046.5" width="262" height="29.5" rx="3" fill="#efefef" stroke="#c4c4c4" stroke-width="1"/>
<rect x="583.6" y="1051.800" width="20.600" height="19" rx="1" fill="#c9c9c7" stroke="#8f8f8d" stroke-width="0.8"/><rect x="585.4" y="1053.800" width="17" height="15" fill="#2c302e"/><path d="M586.8000000000001 1056.400 l1.800 1.2 l-1.800 1.200" fill="none" stroke="#e0e4e0" stroke-width="0.7"/><rect x="589.6" y="1060.500" width="2.400" height="0.8" fill="#e0e4e0"/>
<text x="610" y="1067.2" font-size="14.6" fill="#2e3436" textLength="216" lengthAdjust="spacingAndGlyphs" font-weight="normal" >npg@carme-gsi:~/Programs/CARME...</text>
<rect x="842.5" y="1046.5" width="262" height="29.5" rx="3" fill="#cfcfcf" stroke="#c0c0c0" stroke-width="1"/>
<g transform="translate(848.8,1049.2) scale(1.0)">
<path d="M12.3 3.4 C13.5 2.4 14.1 1.2 14.3 0.2 C16.6 2 18.1 4 18.7 6.1 C19.1 5.4 19.2 4.6 19.1 3.8 C21.6 6.100 23.3 9.500 23.100 13.300 C22.800 19.500 17.900 24 12.100 24 C5.900 24 1 19.400 0.900 13.500 C0.800 10.500 1.900 7.700 3.500 5.900 C3.500 6.900 3.700 7.700 4.100 8.300 C4.700 6.900 5.700 5.900 6.900 5.300 C7.700 6.300 9.100 6.700 10.300 6.300 C10.700 5.100 11.400 4.100 12.300 3.400Z" fill="url(#ffA)"/>
<circle cx="11.7" cy="13" r="5" fill="url(#ffB)"/>
<path d="M4.400 9.200 C6.400 7.300 9.500 7.200 11.700 8.600 C13.100 8.400 14.500 9 15.200 10.100 C13.500 9.700 12.100 10.100 11.300 11.100 C9.700 10.700 8.100 11.300 7.300 12.700 C6.700 11.100 5.600 9.900 4.400 9.200Z" fill="url(#ffC)"/>
<path d="M6.700 14.200 C7.200 17.800 10.400 19.800 13.600 19 C16.600 18.200 18.200 15.400 17.400 12.500 C19 14.700 18.700 18.200 16.200 20.200 C13.100 22.600 8.600 21.800 6.700 18.700 C6 17.400 6.100 15.500 6.700 14.200Z" fill="#ff6a34" opacity="0.85"/>
</g>
<text x="877.5" y="1067.2" font-size="14.6" fill="#2e3436" textLength="183" lengthAdjust="spacingAndGlyphs" font-weight="normal" >Online server — Mozilla Firefox</text>
<rect x="1110.5" y="1046.5" width="262" height="29.5" rx="3" fill="#efefef" stroke="#c4c4c4" stroke-width="1"/>
<path d="M1118.5 1052.5 h13 l5 5 v12.500 h-18z" fill="#fdfdfd" stroke="#e2e2e2" stroke-width="0.8"/><path d="M1126 1063 l2 -2.600 l2 2.600z" fill="#dedede"/>
<text x="1144" y="1067.2" font-size="14.6" fill="#2e3436" textLength="46" lengthAdjust="spacingAndGlyphs" font-weight="normal" >Gnuplot</text>
<rect x="1568.5" y="1048.5" width="53" height="25" rx="2" fill="#e6e6e6" stroke="#cfcfcf"/>
<rect x="1569.5" y="1050.500" width="19" height="10.5" fill="#ececec" stroke="#c6c6c6"/><rect x="1593.500" y="1050.500" width="19" height="10.500" fill="#ececec" stroke="#c6c6c6"/><rect x="1569.500" y="1062.500" width="46" height="10.500" fill="#ececec" stroke="#c6c6c6"/>
<rect x="1625.5" y="1048.500" width="53" height="25" rx="2" fill="#e9e9e9" stroke="#d0d0d0"/>
<rect x="1682.5" y="1048.500" width="53" height="25" rx="2" fill="#e9e9e9" stroke="#d0d0d0"/>
<rect x="1739.5" y="1048.500" width="53" height="25" rx="2" fill="#e9e9e9" stroke="#d0d0d0"/>
<rect x="1797.5" y="1049.500" width="51" height="23.500" rx="1.5" fill="#f6f5f4" stroke="#8b8b8b" stroke-width="2"/>
<rect x="1853.5" y="1048.500" width="53" height="25" rx="2" fill="#e9e9e9" stroke="#d0d0d0"/>
</svg></div>
</body></html>
